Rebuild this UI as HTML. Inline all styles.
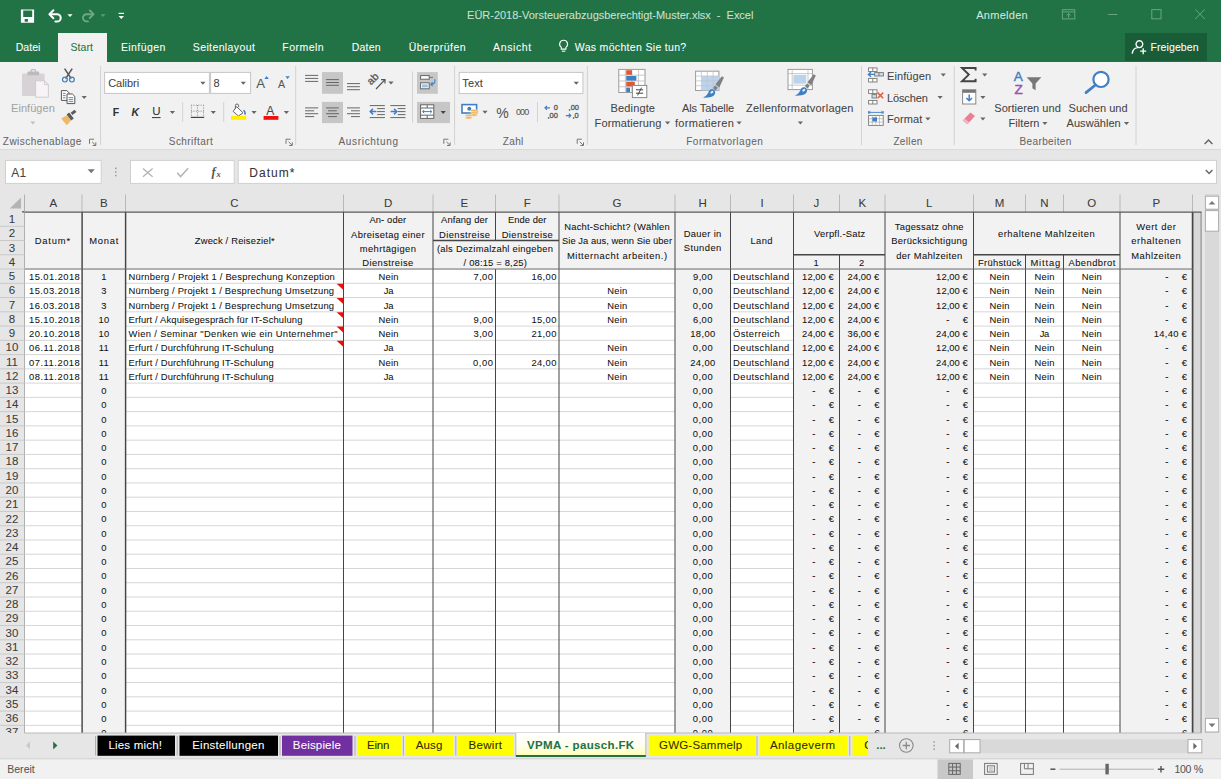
<!DOCTYPE html>
<html lang="de"><head><meta charset="utf-8"><title>EÜR-2018-Vorsteuerabzugsberechtigt-Muster.xlsx - Excel</title>
<style>
html,body{margin:0;padding:0;}
body{width:1221px;height:779px;overflow:hidden;background:#e6e6e6;font-family:"Liberation Sans", sans-serif;position:relative;}
#app{position:absolute;left:0;top:0;width:1221px;height:779px;overflow:hidden;}
#app div,#app svg{position:absolute;box-sizing:border-box;}
.t{white-space:pre;-webkit-text-stroke:0.06px currentColor;}
.c{-webkit-text-stroke:0.06px currentColor;}
</style></head>
<body><div id="app">
<div style="left:0px;top:0px;width:1221px;height:62px;background:#217346;"></div>
<div style="left:0px;top:61.5px;width:1221px;height:88px;background:#f1f1f1;"></div>
<div style="left:0px;top:149px;width:1221px;height:1px;background:#dadada;"></div>
<div style="left:58px;top:33px;width:48.5px;height:29px;background:#f1f1f1;"></div>
<div style="left:1124.5px;top:33px;width:82px;height:27.5px;background:#195c38;"></div>
<svg style="left:0px;top:0px;" width="1221" height="779" viewBox="0 0 1221 779"><path d="M20.9 9.5H34.1V22.7H20.9ZM23.2 10.6V16.9H32.2V10.6ZM24.7 18.9V21.8H27.9V18.9Z" fill="#fff" fill-rule="evenodd"/><path d="M50.2 14.2H57A3.7 3.7 0 0 1 57 21.6H55.4" fill="none" stroke="#fff" stroke-width="2.0" stroke-linecap="round"/><path d="M53.4 10.2L49.4 14.2L53.4 18.2" fill="none" stroke="#fff" stroke-width="2.0" stroke-linecap="round" stroke-linejoin="round"/><path d="M67.40 14.20h5.20l-2.60 2.90z" fill="#fff"/><path d="M93 14.2H86.6A3.6 3.6 0 0 0 86.6 21.4H88" fill="none" stroke="#6fa787" stroke-width="1.9" stroke-linecap="round"/><path d="M89.8 10.4L93.6 14.2L89.8 18" fill="none" stroke="#6fa787" stroke-width="1.9" stroke-linecap="round" stroke-linejoin="round"/><path d="M100.40 14.20h5.20l-2.60 2.90z" fill="#5c9a78"/><line x1="118.6" y1="13.4" x2="124" y2="13.4" stroke="#fff" stroke-width="1.2"/><path d="M118.6 16.1h5.4l-2.7 3z" fill="#fff" /><rect x="1062.4" y="9.7" width="12.4" height="9.2" fill="none" stroke="#69a583" stroke-width="1"/><line x1="1062.4" y1="11.9" x2="1074.8" y2="11.9" stroke="#69a583" stroke-width="1"/><path d="M1068.6 17.8V13.6M1066.6 15.5l2-1.9l2 1.9" fill="none" stroke="#69a583" stroke-width="1" /><line x1="1108.2" y1="14.5" x2="1117.4" y2="14.5" stroke="#69a583" stroke-width="1"/><rect x="1151.8" y="9.6" width="9.2" height="9.2" fill="none" stroke="#69a583" stroke-width="1"/><path d="M1195.2 9.4l9.6 9.6M1204.8 9.4l-9.6 9.6" fill="none" stroke="#69a583" stroke-width="1" /><path d="M563.6 40.3a3.9 3.9 0 0 1 2.3 7.1v1.7h-4.6v-1.7a3.9 3.9 0 0 1 2.3-7.1z" fill="none" stroke="#fff" stroke-width="1.1" /><line x1="561.9" y1="51.2" x2="565.3" y2="51.2" stroke="#fff" stroke-width="1.1"/><path d="M1139.4 40.8a3.4 3.4 0 1 1-.01 0zM1132.2 53.6c.6-4.4 3.4-6 6-6" fill="none" stroke="#fff" stroke-width="1.4" /><path d="M1143.2 48.2v6M1140.2 51.2h6" fill="none" stroke="#fff" stroke-width="1.3" /><line x1="100.6" y1="66" x2="100.6" y2="145" stroke="#d2d2d2" stroke-width="1"/><line x1="295.7" y1="66" x2="295.7" y2="145" stroke="#d2d2d2" stroke-width="1"/><line x1="454.6" y1="66" x2="454.6" y2="145" stroke="#d2d2d2" stroke-width="1"/><line x1="587.4" y1="66" x2="587.4" y2="145" stroke="#d2d2d2" stroke-width="1"/><line x1="861.5" y1="66" x2="861.5" y2="145" stroke="#d2d2d2" stroke-width="1"/><line x1="954.3" y1="66" x2="954.3" y2="145" stroke="#d2d2d2" stroke-width="1"/><line x1="1136" y1="66" x2="1136" y2="145" stroke="#d2d2d2" stroke-width="1"/><line x1="182.7" y1="102" x2="182.7" y2="122" stroke="#d2d2d2" stroke-width="1"/><line x1="223.7" y1="102" x2="223.7" y2="122" stroke="#d2d2d2" stroke-width="1"/><line x1="412.6" y1="71.5" x2="412.6" y2="122.8" stroke="#d2d2d2" stroke-width="1"/><line x1="537.5" y1="102" x2="537.5" y2="122.2" stroke="#d2d2d2" stroke-width="1"/><path d="M89.5 143.79999999999998V139.2H94.1" fill="none" stroke="#777" stroke-width="1" /><path d="M92.1 141.79999999999998L95.5 145.2M95.8 142.39999999999998V145.5H92.7" fill="none" stroke="#777" stroke-width="1" /><path d="M286 143.79999999999998V139.2H290.6" fill="none" stroke="#777" stroke-width="1" /><path d="M288.6 141.79999999999998L292 145.2M292.3 142.39999999999998V145.5H289.2" fill="none" stroke="#777" stroke-width="1" /><path d="M443.8 143.79999999999998V139.2H448.40000000000003" fill="none" stroke="#777" stroke-width="1" /><path d="M446.40000000000003 141.79999999999998L449.8 145.2M450.1 142.39999999999998V145.5H447.0" fill="none" stroke="#777" stroke-width="1" /><path d="M577.2 143.79999999999998V139.2H581.8000000000001" fill="none" stroke="#777" stroke-width="1" /><path d="M579.8000000000001 141.79999999999998L583.2 145.2M583.5 142.39999999999998V145.5H580.4000000000001" fill="none" stroke="#777" stroke-width="1" /><path d="M1204.6 144l3.9-4l3.9 4" fill="none" stroke="#666" stroke-width="1.5" /><rect x="22" y="73.6" width="22.6" height="22.3" fill="#d6d2d6" rx="1.2"/><rect x="27.5" y="71.4" width="11.6" height="3.8" fill="#bdb9bd" rx="0.8"/><rect x="31" y="69.6" width="4.6" height="3" fill="none" stroke="#bdb9bd" stroke-width="1.1" rx="1"/><path d="M35.6 80.8H44.6L48.4 84.6V97.2H35.6Z" fill="#f7f3f7" stroke="#cfcbcf" stroke-width="1" /><path d="M44.6 80.8V84.6H48.4" fill="none" stroke="#cfcbcf" stroke-width="1" /><path d="M30.20 121.60h5.20l-2.60 2.90z" fill="#c0c0c0"/><path d="M64.6 68.6L71.2 78.6M72.2 68.6L65.6 78.6" fill="none" stroke="#555" stroke-width="1.5" /><circle cx="64.9" cy="79.6" r="2.4" fill="none" stroke="#3f7fc4" stroke-width="1.2"/><circle cx="71.9" cy="79.6" r="2.4" fill="none" stroke="#3f7fc4" stroke-width="1.2"/><path d="M61.4 90.6h5.4l2.2 2.2v7.6h-7.6z" fill="#fff" stroke="#555" stroke-width="1" /><path d="M67 94h5.4l2.4 2.4v7.2H67z" fill="#fff" stroke="#555" stroke-width="1" /><line x1="62.9" y1="93.4" x2="65.6" y2="93.4" stroke="#3f7fc4" stroke-width="0.9"/><line x1="62.9" y1="95.6" x2="65.6" y2="95.6" stroke="#3f7fc4" stroke-width="0.9"/><line x1="62.9" y1="97.8" x2="65.6" y2="97.8" stroke="#3f7fc4" stroke-width="0.9"/><line x1="68.6" y1="97.6" x2="73.2" y2="97.6" stroke="#3f7fc4" stroke-width="0.9"/><line x1="68.6" y1="99.6" x2="73.2" y2="99.6" stroke="#3f7fc4" stroke-width="0.9"/><line x1="68.6" y1="101.6" x2="73.2" y2="101.6" stroke="#3f7fc4" stroke-width="0.9"/><path d="M81.60 96.00h5.20l-2.60 2.90z" fill="#666"/><path d="M61.2 118.6L66.8 115.2L71 120.6L66.8 125.2Z" fill="#eeb865" /><path d="M66.6 114.6l2.6-2l4.6 5.8l-2.6 2z" fill="#5a5a5a" /><path d="M70.6 112.8l4-3l1.8 2.3l-4 3z" fill="#5a5a5a" /><rect x="104.6" y="72.4" width="104.8" height="21" fill="#fff" stroke="#c6c6c6" stroke-width="1"/><rect x="210.6" y="72.4" width="40" height="21" fill="#fff" stroke="#c6c6c6" stroke-width="1"/><path d="M200.30 81.80h5.20l-2.60 2.90z" fill="#666"/><path d="M240.70 81.80h5.20l-2.60 2.90z" fill="#666"/><path d="M264.4 78.9l2.2-2.8l2.2 2.8z" fill="#3f7fc4" /><path d="M285.4 76.2h4.4l-2.2 2.8z" fill="#3f7fc4" /><line x1="152" y1="117.6" x2="160.6" y2="117.6" stroke="#333" stroke-width="1"/><path d="M169.80 111.10h5.20l-2.60 2.90z" fill="#666"/><line x1="191" y1="105.2" x2="204" y2="105.2" stroke="#9a9a9a" stroke-width="1" stroke-dasharray="1.2 1.2"/><line x1="191" y1="111.2" x2="204" y2="111.2" stroke="#9a9a9a" stroke-width="1" stroke-dasharray="1.2 1.2"/><line x1="191.4" y1="105" x2="191.4" y2="117" stroke="#9a9a9a" stroke-width="1" stroke-dasharray="1.2 1.2"/><line x1="197.5" y1="105" x2="197.5" y2="117" stroke="#9a9a9a" stroke-width="1" stroke-dasharray="1.2 1.2"/><line x1="203.6" y1="105" x2="203.6" y2="117" stroke="#9a9a9a" stroke-width="1" stroke-dasharray="1.2 1.2"/><line x1="190.8" y1="117.4" x2="204.2" y2="117.4" stroke="#444" stroke-width="1.2"/><path d="M210.70 111.10h5.20l-2.60 2.90z" fill="#666"/><path d="M236.6 106.6l6.4 6.2l-4.6 3.2l-5.2-4.6z" fill="#fff" stroke="#666" stroke-width="1" /><path d="M235.4 108.6v-3a1.6 1.6 0 0 1 3.2 0v1.4" fill="none" stroke="#666" stroke-width="1" /><path d="M243.6 110.2c1.4 1.4 2 2.8 1.2 4.4" fill="none" stroke="#3f7fc4" stroke-width="1.5" /><rect x="231" y="116" width="15.2" height="3.8" fill="#ffee00"/><path d="M251.40 111.10h5.20l-2.60 2.90z" fill="#666"/><rect x="263.6" y="116" width="14.8" height="3.8" fill="#ee1111"/><path d="M283.80 111.10h5.20l-2.60 2.90z" fill="#666"/><rect x="322" y="72.1" width="21" height="21.7" fill="#c6c6c6"/><rect x="322" y="101.9" width="21" height="21.2" fill="#c6c6c6"/><rect x="417" y="72.1" width="20.8" height="21.7" fill="#c6c6c6"/><rect x="417" y="101.9" width="33" height="21.2" fill="#c6c6c6"/><line x1="305.1" y1="75.4" x2="318.2" y2="75.4" stroke="#666" stroke-width="1"/><line x1="305.1" y1="78.4" x2="318.2" y2="78.4" stroke="#666" stroke-width="1"/><line x1="305.1" y1="81.4" x2="318.2" y2="81.4" stroke="#666" stroke-width="1"/><line x1="326.1" y1="79.6" x2="338.9" y2="79.6" stroke="#666" stroke-width="1"/><line x1="326.1" y1="82.5" x2="338.9" y2="82.5" stroke="#666" stroke-width="1"/><line x1="326.1" y1="85.3" x2="338.9" y2="85.3" stroke="#666" stroke-width="1"/><line x1="347" y1="83.6" x2="359.9" y2="83.6" stroke="#666" stroke-width="1"/><line x1="347" y1="86.7" x2="359.9" y2="86.7" stroke="#666" stroke-width="1"/><line x1="347" y1="89.7" x2="359.9" y2="89.7" stroke="#666" stroke-width="1"/><line x1="305.1" y1="107.9" x2="318.2" y2="107.9" stroke="#666" stroke-width="1"/><line x1="326.1" y1="107.9" x2="338.9" y2="107.9" stroke="#666" stroke-width="1"/><line x1="347" y1="107.9" x2="359.9" y2="107.9" stroke="#666" stroke-width="1"/><line x1="305.1" y1="110.8" x2="314.2" y2="110.8" stroke="#666" stroke-width="1"/><line x1="328.1" y1="110.8" x2="336.9" y2="110.8" stroke="#666" stroke-width="1"/><line x1="351" y1="110.8" x2="359.9" y2="110.8" stroke="#666" stroke-width="1"/><line x1="305.1" y1="113.7" x2="318.2" y2="113.7" stroke="#666" stroke-width="1"/><line x1="326.1" y1="113.7" x2="338.9" y2="113.7" stroke="#666" stroke-width="1"/><line x1="347" y1="113.7" x2="359.9" y2="113.7" stroke="#666" stroke-width="1"/><line x1="305.1" y1="116.6" x2="314.2" y2="116.6" stroke="#666" stroke-width="1"/><line x1="328.1" y1="116.6" x2="336.9" y2="116.6" stroke="#666" stroke-width="1"/><line x1="351" y1="116.6" x2="359.9" y2="116.6" stroke="#666" stroke-width="1"/><text x="0" y="0" transform="translate(371 85.4) rotate(-45)" font-family="Liberation Sans, sans-serif" font-size="10.5" fill="#555" stroke="#555" stroke-width="0.3">ab</text><path d="M376 89L384.8 79.8M381 79.6h4v4" fill="none" stroke="#555" stroke-width="1.2" /><path d="M388.40 81.60h5.20l-2.60 2.90z" fill="#666"/><line x1="369.7" y1="105.6" x2="384.9" y2="105.6" stroke="#666" stroke-width="1"/><line x1="369.7" y1="117.6" x2="384.9" y2="117.6" stroke="#666" stroke-width="1"/><line x1="377.09999999999997" y1="108.6" x2="384.9" y2="108.6" stroke="#666" stroke-width="1"/><line x1="377.09999999999997" y1="111.6" x2="384.9" y2="111.6" stroke="#666" stroke-width="1"/><line x1="377.09999999999997" y1="114.6" x2="384.9" y2="114.6" stroke="#666" stroke-width="1"/><line x1="390.3" y1="105.6" x2="405.5" y2="105.6" stroke="#666" stroke-width="1"/><line x1="390.3" y1="117.6" x2="405.5" y2="117.6" stroke="#666" stroke-width="1"/><line x1="397.7" y1="108.6" x2="405.5" y2="108.6" stroke="#666" stroke-width="1"/><line x1="397.7" y1="111.6" x2="405.5" y2="111.6" stroke="#666" stroke-width="1"/><line x1="397.7" y1="114.6" x2="405.5" y2="114.6" stroke="#666" stroke-width="1"/><path d="M376.4 111.6H370.4M373 108.8l-2.8 2.8l2.8 2.8" fill="none" stroke="#3f7fc4" stroke-width="1.5" /><path d="M390.6 111.6H396.6M394 108.8l2.8 2.8l-2.8 2.8" fill="none" stroke="#3f7fc4" stroke-width="1.5" /><rect x="420.6" y="75.6" width="8.6" height="3.6" fill="#fff" stroke="#666" stroke-width="1"/><line x1="429.2" y1="77.4" x2="433" y2="77.4" stroke="#3f7fc4" stroke-width="1"/><rect x="420.6" y="82.8" width="8.6" height="6" fill="#fff" stroke="#666" stroke-width="1"/><rect x="422" y="84.4" width="5.8" height="3" fill="#9dbfe6"/><path d="M434.6 79.2c1.2 3-0.4 5-3.4 5M432.6 82.4l-1.8 1.8l1.8 1.8" fill="none" stroke="#3f7fc4" stroke-width="1.1" /><rect x="420.6" y="104.8" width="13.2" height="13.6" fill="#fff" stroke="#666" stroke-width="1"/><line x1="420.6" y1="108" x2="433.8" y2="108" stroke="#666" stroke-width="1"/><line x1="420.6" y1="115.2" x2="433.8" y2="115.2" stroke="#666" stroke-width="1"/><line x1="427.2" y1="104.8" x2="427.2" y2="108" stroke="#666" stroke-width="1"/><line x1="427.2" y1="115.2" x2="427.2" y2="118.4" stroke="#666" stroke-width="1"/><path d="M422.6 111.6h9.2M424.2 110l-1.6 1.6l1.6 1.6M430.2 110l1.6 1.6l-1.6 1.6" fill="none" stroke="#3f7fc4" stroke-width="1" /><path d="M440.60 111.00h5.20l-2.60 2.90z" fill="#444"/><rect x="459.2" y="72.4" width="123.7" height="21.2" fill="#fff" stroke="#c6c6c6" stroke-width="1"/><path d="M573.70 81.80h5.20l-2.60 2.90z" fill="#666"/><rect x="462" y="104.6" width="14.6" height="8.4" fill="#fff" stroke="#3f7fc4" stroke-width="1.6"/><circle cx="469.3" cy="108.8" r="2" fill="#3f7fc4"/><ellipse cx="474" cy="110.6" rx="3.4" ry="1.3" fill="#edb760" stroke="#f1f1f1" stroke-width="0.5"/><ellipse cx="474" cy="112.8" rx="3.4" ry="1.3" fill="#edb760" stroke="#f1f1f1" stroke-width="0.5"/><ellipse cx="474" cy="115" rx="3.4" ry="1.3" fill="#edb760" stroke="#f1f1f1" stroke-width="0.5"/><ellipse cx="468.6" cy="115.6" rx="3.4" ry="1.3" fill="#edb760" stroke="#f1f1f1" stroke-width="0.5"/><ellipse cx="468.6" cy="117.8" rx="3.4" ry="1.3" fill="#edb760" stroke="#f1f1f1" stroke-width="0.5"/><path d="M482.40 110.80h5.20l-2.60 2.90z" fill="#666"/><text x="553.8" y="110.2" font-family="Liberation Sans, sans-serif" font-size="7.5" fill="#555" stroke="#555" stroke-width="0.3">0</text><text x="547.4" y="117.8" font-family="Liberation Sans, sans-serif" font-size="7.5" fill="#555" stroke="#555" stroke-width="0.3">,00</text><path d="M545 107.8h5M547 105.8l-2 2l2 2" fill="none" stroke="#3f7fc4" stroke-width="1.2" /><text x="568.6" y="110.2" font-family="Liberation Sans, sans-serif" font-size="7.5" fill="#555" stroke="#555" stroke-width="0.3">,00</text><text x="572.4" y="117.8" font-family="Liberation Sans, sans-serif" font-size="7.5" fill="#555" stroke="#555" stroke-width="0.3">,0</text><path d="M565.8 115.6h5M568.8 113.6l2 2l-2 2" fill="none" stroke="#3f7fc4" stroke-width="1.2" /><rect x="618.8" y="69.4" width="26.2" height="23.1" fill="#fff" stroke="#999" stroke-width="1"/><line x1="618.8" y1="75.18" x2="645" y2="75.18" stroke="#bbb" stroke-width="0.8"/><line x1="618.8" y1="80.96000000000001" x2="645" y2="80.96000000000001" stroke="#bbb" stroke-width="0.8"/><line x1="618.8" y1="86.74000000000001" x2="645" y2="86.74000000000001" stroke="#bbb" stroke-width="0.8"/><line x1="625.3499999999999" y1="69.4" x2="625.3499999999999" y2="92.5" stroke="#bbb" stroke-width="0.8"/><line x1="631.9" y1="69.4" x2="631.9" y2="92.5" stroke="#bbb" stroke-width="0.8"/><line x1="638.4499999999999" y1="69.4" x2="638.4499999999999" y2="92.5" stroke="#bbb" stroke-width="0.8"/><rect x="626.2" y="70.2" width="5.8" height="4.6" fill="#dd5a33"/><rect x="626.2" y="76" width="10.2" height="4.6" fill="#3f7fc4"/><rect x="626.2" y="81.8" width="8.6" height="4.6" fill="#dd5a33"/><rect x="626.2" y="87.6" width="3.8" height="4.4" fill="#3f7fc4"/><rect x="632.4" y="85.4" width="14.4" height="12.2" fill="#fff" stroke="#888" stroke-width="1"/><path d="M636 89.8h7.2M636 93.2h7.2M641.6 87.6l-4 7.8" fill="none" stroke="#444" stroke-width="1" /><path d="M665.00 121.50h5.20l-2.60 2.90z" fill="#666"/><rect x="695.6" y="71.2" width="23.3" height="19.3" fill="#fff" stroke="#999" stroke-width="1"/><rect x="701.6" y="76" width="17.3" height="14.5" fill="#bcd3ee"/><line x1="695.6" y1="76.03" x2="718.9" y2="76.03" stroke="#c4c4c4" stroke-width="0.8"/><line x1="695.6" y1="80.86" x2="718.9" y2="80.86" stroke="#c4c4c4" stroke-width="0.8"/><line x1="695.6" y1="85.69" x2="718.9" y2="85.69" stroke="#c4c4c4" stroke-width="0.8"/><line x1="701.4300000000001" y1="71.2" x2="701.4300000000001" y2="90.5" stroke="#c4c4c4" stroke-width="0.8"/><line x1="707.26" y1="71.2" x2="707.26" y2="90.5" stroke="#c4c4c4" stroke-width="0.8"/><line x1="713.09" y1="71.2" x2="713.09" y2="90.5" stroke="#c4c4c4" stroke-width="0.8"/><path d="M702.3 97.6C706.3 96.6 707.6999999999999 94.0 708.9 91.19999999999999C709.9 89.0 713.6999999999999 88.6 714.9 91.0C715.9 93.39999999999999 714.3 96.19999999999999 710.9 97.0C707.9 97.69999999999999 704.9 97.69999999999999 702.3 97.6Z" fill="#3f7fc4" /><path d="M712.9 88.0L715.3 85.39999999999999L717.9 87.8L715.5 90.39999999999999Z" fill="#808080" /><path d="M715.5 84.19999999999999L721.9 76.19999999999999L723.9 77.6L719.3 87.39999999999999Z" fill="#808080" /><ellipse cx="711.9" cy="92.19999999999999" rx="1.7" ry="1.1" fill="#e6eef8" transform="rotate(-35 711.9 92.19999999999999)"/><path d="M736.50 121.50h5.20l-2.60 2.90z" fill="#666"/><rect x="788" y="69.4" width="24.4" height="20.2" fill="#fff" stroke="#999" stroke-width="1"/><line x1="788" y1="73.6" x2="812.4" y2="73.6" stroke="#bbb" stroke-width="0.8"/><line x1="788" y1="85.2" x2="812.4" y2="85.2" stroke="#bbb" stroke-width="0.8"/><line x1="792.2" y1="69.4" x2="792.2" y2="89.6" stroke="#bbb" stroke-width="0.8"/><line x1="808" y1="69.4" x2="808" y2="89.6" stroke="#bbb" stroke-width="0.8"/><rect x="793.4" y="74.9" width="12.9" height="8.8" fill="#bcd3ee"/><path d="M794.2 95.6C798.2 94.6 799.6 92.0 800.8000000000001 89.19999999999999C801.8000000000001 87.0 805.6 86.6 806.8000000000001 89.0C807.8000000000001 91.39999999999999 806.2 94.19999999999999 802.8000000000001 95.0C799.8000000000001 95.69999999999999 796.8000000000001 95.69999999999999 794.2 95.6Z" fill="#3f7fc4" /><path d="M804.8000000000001 86.0L807.2 83.39999999999999L809.8000000000001 85.8L807.4000000000001 88.39999999999999Z" fill="#808080" /><path d="M807.4000000000001 82.19999999999999L813.8000000000001 74.19999999999999L815.8000000000001 75.6L811.2 85.39999999999999Z" fill="#808080" /><ellipse cx="803.8000000000001" cy="90.19999999999999" rx="1.7" ry="1.1" fill="#e6eef8" transform="rotate(-35 803.8000000000001 90.19999999999999)"/><path d="M797.80 121.50h5.20l-2.60 2.90z" fill="#666"/><rect x="868.6" y="67.9" width="8.4" height="3.6" fill="#fff" stroke="#777" stroke-width="0.9"/><line x1="872.8000000000001" y1="67.9" x2="872.8000000000001" y2="71.5" stroke="#777" stroke-width="0.9"/><rect x="868.6" y="78.4" width="8.4" height="3.6" fill="#fff" stroke="#777" stroke-width="0.9"/><line x1="872.8000000000001" y1="78.4" x2="872.8000000000001" y2="82.0" stroke="#777" stroke-width="0.9"/><rect x="874.6" y="72.6" width="8.8" height="3.4" fill="#c9dcf2" stroke="#777" stroke-width="0.9"/><line x1="879" y1="72.6" x2="879" y2="76" stroke="#777" stroke-width="0.9"/><path d="M874 74.4h-5.4M871 72l-2.6 2.4l2.6 2.4" fill="none" stroke="#3f7fc4" stroke-width="1.4" /><path d="M940.70 73.60h5.20l-2.60 2.90z" fill="#666"/><rect x="868.6" y="89.8" width="8.4" height="3.6" fill="#fff" stroke="#777" stroke-width="0.9"/><line x1="872.8000000000001" y1="89.8" x2="872.8000000000001" y2="93.39999999999999" stroke="#777" stroke-width="0.9"/><rect x="868.6" y="100.4" width="8.4" height="3.6" fill="#fff" stroke="#777" stroke-width="0.9"/><line x1="872.8000000000001" y1="100.4" x2="872.8000000000001" y2="104.0" stroke="#777" stroke-width="0.9"/><rect x="872" y="94.6" width="4.6" height="3.4" fill="#c9dcf2" stroke="#777" stroke-width="0.9"/><path d="M877.6 92.6l5.6 5.6M883.2 92.6l-5.6 5.6" fill="none" stroke="#e0613c" stroke-width="1.5" /><path d="M937.50 96.10h5.20l-2.60 2.90z" fill="#666"/><path d="M868.6 112.4h14.6M868.6 111v2.8M883.2 111v2.8M870.4 111.2l-1.6 1.2l1.6 1.2M881.4 111.2l1.6 1.2l-1.6 1.2" fill="none" stroke="#3f7fc4" stroke-width="0.9" /><rect x="868.6" y="115.4" width="14.6" height="10" fill="#fff" stroke="#777" stroke-width="0.9"/><line x1="868.6" y1="118.73" x2="883.2" y2="118.73" stroke="#aaa" stroke-width="0.7"/><line x1="868.6" y1="122.06" x2="883.2" y2="122.06" stroke="#aaa" stroke-width="0.7"/><line x1="872.25" y1="115.4" x2="872.25" y2="125.4" stroke="#aaa" stroke-width="0.7"/><line x1="875.9" y1="115.4" x2="875.9" y2="125.4" stroke="#aaa" stroke-width="0.7"/><line x1="879.5500000000001" y1="115.4" x2="879.5500000000001" y2="125.4" stroke="#aaa" stroke-width="0.7"/><rect x="872.4" y="117.4" width="4.6" height="4" fill="#3f7fc4"/><path d="M925.30 117.50h5.20l-2.60 2.90z" fill="#666"/><path d="M975.6 70.4V68H962L968.8 74.6L962 81.2H975.6V78.8" fill="none" stroke="#444" stroke-width="1.9" /><path d="M982.10 73.60h5.20l-2.60 2.90z" fill="#666"/><rect x="962.6" y="89.8" width="13.2" height="14.2" fill="#fff" stroke="#888" stroke-width="1"/><rect x="962.6" y="89.8" width="13.2" height="3" fill="#777"/><path d="M969.2 94.6v6M966.4 98l2.8 2.8l2.8-2.8" fill="none" stroke="#3f7fc4" stroke-width="1.5" /><path d="M980.30 96.10h5.20l-2.60 2.90z" fill="#666"/><path d="M962.8 120.6l7.6-8.2l4.6 3.6l-7.6 8.2z" fill="#e87f95" /><path d="M962.8 120.6l1.8-2l4.6 3.6l-1.8 2z" fill="#f4b6c2" /><path d="M980.30 117.50h5.20l-2.60 2.90z" fill="#666"/><text x="1013.8" y="81.3" font-family="Liberation Sans, sans-serif" font-size="13.6" fill="#3f7fc4" stroke="#3f7fc4" stroke-width="0.4">A</text><text x="1014.6" y="93.9" font-family="Liberation Sans, sans-serif" font-size="13.6" fill="#9b4fb4" stroke="#9b4fb4" stroke-width="0.4">Z</text><path d="M1026.6 77.2h14.8l-5.8 6.4v6.6l-3.2-2v-4.6z" fill="#777" /><path d="M1042.30 122.00h5.20l-2.60 2.90z" fill="#666"/><circle cx="1101" cy="79.4" r="7.6" fill="#fff" stroke="#3f7fc4" stroke-width="2.2"/><path d="M1095.4 85L1086 92.6" fill="none" stroke="#3f7fc4" stroke-width="2.8" stroke-linecap="round"/><path d="M1123.90 122.00h5.20l-2.60 2.90z" fill="#666"/><rect x="5.5" y="160.4" width="95.7" height="23" fill="#fff" stroke="#d0d0d0" stroke-width="1"/><rect x="130.5" y="160.4" width="103.7" height="23" fill="#fff" stroke="#d0d0d0" stroke-width="1"/><rect x="238.2" y="160.4" width="978.3" height="23" fill="#fff" stroke="#d0d0d0" stroke-width="1"/><path d="M87.56 169.24h7.28l-3.64 4.06z" fill="#777"/><rect x="115" y="167.6" width="1.5" height="1.5" fill="#9a9a9a"/><rect x="115" y="171.2" width="1.5" height="1.5" fill="#9a9a9a"/><rect x="115" y="174.8" width="1.5" height="1.5" fill="#9a9a9a"/><path d="M143 168.4l9.6 8.4M152.6 168.4l-9.6 8.4" fill="none" stroke="#b4b4b4" stroke-width="1.3" /><path d="M177.2 172.8l3.4 3.8l7.6-8.4" fill="none" stroke="#b4b4b4" stroke-width="1.5" /><text x="211.6" y="176.4" font-family="Liberation Serif, serif" font-style="italic" font-weight="bold" font-size="12.5" fill="#555">f</text><text x="216.4" y="177" font-family="Liberation Serif, serif" font-style="italic" font-weight="bold" font-size="8.5" fill="#555">x</text><path d="M1205.8 170l3.3 3.4l3.3-3.4" fill="none" stroke="#666" stroke-width="1.5" /></svg>
<div class="t" style="left:467.10px;top:8px;font-size:11px;line-height:15px;color:#cde0d4;letter-spacing:-0.019px;">EÜR-2018-Vorsteuerabzugsberechtigt-Muster.xlsx  -  Excel</div>
<div class="t" style="left:976.20px;top:8px;font-size:11px;line-height:15px;color:#d5e6db;letter-spacing:0.281px;">Anmelden</div>
<div class="t" style="left:15.70px;top:40px;font-size:10.5px;line-height:15px;color:#fff;letter-spacing:0.047px;">Datei</div>
<div class="t" style="left:120.90px;top:40px;font-size:10.5px;line-height:15px;color:#fff;letter-spacing:0.436px;">Einfügen</div>
<div class="t" style="left:192.80px;top:40px;font-size:10.5px;line-height:15px;color:#fff;letter-spacing:0.383px;">Seitenlayout</div>
<div class="t" style="left:282.30px;top:40px;font-size:10.5px;line-height:15px;color:#fff;letter-spacing:0.482px;">Formeln</div>
<div class="t" style="left:351.70px;top:40px;font-size:10.5px;line-height:15px;color:#fff;letter-spacing:0.245px;">Daten</div>
<div class="t" style="left:408.70px;top:40px;font-size:10.5px;line-height:15px;color:#fff;letter-spacing:0.485px;">Überprüfen</div>
<div class="t" style="left:493.10px;top:40px;font-size:10.5px;line-height:15px;color:#fff;letter-spacing:0.595px;">Ansicht</div>
<div class="t" style="left:574.80px;top:40px;font-size:10.5px;line-height:15px;color:#fff;letter-spacing:0.324px;">Was möchten Sie tun?</div>
<div class="t" style="left:70.40px;top:40px;font-size:10.5px;line-height:15px;color:#217346;letter-spacing:0.081px;">Start</div>
<div class="t" style="left:1150.50px;top:40px;font-size:10.5px;line-height:15px;color:#fff;letter-spacing:0.102px;">Freigeben</div>
<div class="t" style="left:11.00px;top:101px;font-size:11px;line-height:15px;color:#a3a3a3;letter-spacing:0.054px;">Einfügen</div>
<div class="t" style="left:2.80px;top:135px;font-size:10px;line-height:14px;color:#666;letter-spacing:0.487px;">Zwischenablage</div>
<div class="t" style="left:108.20px;top:76px;font-size:11px;line-height:15px;color:#444;letter-spacing:-0.029px;">Calibri</div>
<div class="t" style="left:213.40px;top:76px;font-size:11px;line-height:15px;color:#444;">8</div>
<div class="t" style="left:256.20px;top:75px;font-size:13.2px;line-height:18px;color:#555;">A</div>
<div class="t" style="left:278.00px;top:77px;font-size:10.6px;line-height:15px;color:#555;">A</div>
<div class="t" style="left:112.80px;top:105px;font-size:10.5px;line-height:15px;color:#333;font-weight:bold;">F</div>
<div class="t" style="left:131.40px;top:105px;font-size:10.5px;line-height:15px;color:#333;font-weight:bold;font-style:italic;">K</div>
<div class="t" style="left:152.20px;top:103px;font-size:11.5px;line-height:16px;color:#333;">U</div>
<div class="t" style="left:266.30px;top:103px;font-size:12px;line-height:17px;color:#444;">A</div>
<div class="t" style="left:168.80px;top:135px;font-size:10px;line-height:14px;color:#666;letter-spacing:0.432px;">Schriftart</div>
<div class="t" style="left:338.50px;top:135px;font-size:10px;line-height:14px;color:#666;letter-spacing:0.669px;">Ausrichtung</div>
<div class="t" style="left:462.30px;top:76px;font-size:11px;line-height:15px;color:#444;letter-spacing:0.142px;">Text</div>
<div class="t" style="left:496.20px;top:103px;font-size:14px;line-height:20px;color:#555;">%</div>
<div class="t" style="left:516.00px;top:106px;font-size:9px;line-height:13px;color:#555;letter-spacing:-0.908px;">000</div>
<div class="t" style="left:502.80px;top:135px;font-size:10px;line-height:14px;color:#666;letter-spacing:0.349px;">Zahl</div>
<div class="t" style="left:610.60px;top:101px;font-size:11px;line-height:15px;color:#444;letter-spacing:0.139px;">Bedingte</div>
<div class="t" style="left:594.60px;top:116px;font-size:11px;line-height:15px;color:#444;letter-spacing:0.126px;">Formatierung</div>
<div class="t" style="left:681.90px;top:101px;font-size:11px;line-height:15px;color:#444;letter-spacing:-0.070px;">Als Tabelle</div>
<div class="t" style="left:674.90px;top:116px;font-size:11px;line-height:15px;color:#444;letter-spacing:0.337px;">formatieren</div>
<div class="t" style="left:746.10px;top:101px;font-size:11px;line-height:15px;color:#444;letter-spacing:0.214px;">Zellenformatvorlagen</div>
<div class="t" style="left:686.20px;top:135px;font-size:10px;line-height:14px;color:#666;letter-spacing:0.513px;">Formatvorlagen</div>
<div class="t" style="left:887.00px;top:69px;font-size:11px;line-height:15px;color:#444;letter-spacing:0.082px;">Einfügen</div>
<div class="t" style="left:887.00px;top:91px;font-size:11px;line-height:15px;color:#444;letter-spacing:-0.131px;">Löschen</div>
<div class="t" style="left:887.00px;top:112px;font-size:11px;line-height:15px;color:#444;letter-spacing:0.113px;">Format</div>
<div class="t" style="left:893.40px;top:135px;font-size:10px;line-height:14px;color:#666;letter-spacing:0.353px;">Zellen</div>
<div class="t" style="left:994.30px;top:101px;font-size:11px;line-height:15px;color:#444;letter-spacing:0.038px;">Sortieren und</div>
<div class="t" style="left:1008.60px;top:116px;font-size:11px;line-height:15px;color:#444;letter-spacing:0.056px;">Filtern</div>
<div class="t" style="left:1068.50px;top:101px;font-size:11px;line-height:15px;color:#444;letter-spacing:0.043px;">Suchen und</div>
<div class="t" style="left:1066.60px;top:116px;font-size:11px;line-height:15px;color:#444;letter-spacing:0.036px;">Auswählen</div>
<div class="t" style="left:1019.40px;top:135px;font-size:10px;line-height:14px;color:#666;letter-spacing:0.403px;">Bearbeiten</div>
<div class="t" style="left:11.20px;top:165px;font-size:12px;line-height:17px;color:#444;letter-spacing:0.322px;">A1</div>
<div class="t" style="left:249.30px;top:165px;font-size:12px;line-height:17px;color:#333;letter-spacing:0.997px;">Datum*</div>
<svg style="left:0px;top:0px;" width="1221" height="779" viewBox="0 0 1221 779"><rect x="24.5" y="212.0" width="1176.5" height="521.0" fill="#fff"/><rect x="82" y="212.0" width="43.5" height="521.0" fill="#f2f2f2"/><rect x="675" y="212.0" width="55.5" height="521.0" fill="#f2f2f2"/><rect x="793.5" y="212.0" width="46.0" height="521.0" fill="#f2f2f2"/><rect x="839.5" y="212.0" width="45.5" height="521.0" fill="#f2f2f2"/><rect x="885" y="212.0" width="88.5" height="521.0" fill="#f2f2f2"/><rect x="1120" y="212.0" width="72.5" height="521.0" fill="#f2f2f2"/><rect x="24.5" y="212.0" width="1168.0" height="57.04" fill="#f2f2f2"/><rect x="1192.5" y="212.0" width="8.5" height="521.0" fill="#d9d9d9"/><line x1="24.5" y1="283.30" x2="82" y2="283.30" stroke="#d6d6d6" stroke-width="1"/><line x1="125.5" y1="283.30" x2="675" y2="283.30" stroke="#d6d6d6" stroke-width="1"/><line x1="730.5" y1="283.30" x2="793.5" y2="283.30" stroke="#d6d6d6" stroke-width="1"/><line x1="973.5" y1="283.30" x2="1120" y2="283.30" stroke="#d6d6d6" stroke-width="1"/><line x1="24.5" y1="297.56" x2="82" y2="297.56" stroke="#d6d6d6" stroke-width="1"/><line x1="125.5" y1="297.56" x2="675" y2="297.56" stroke="#d6d6d6" stroke-width="1"/><line x1="730.5" y1="297.56" x2="793.5" y2="297.56" stroke="#d6d6d6" stroke-width="1"/><line x1="973.5" y1="297.56" x2="1120" y2="297.56" stroke="#d6d6d6" stroke-width="1"/><line x1="24.5" y1="311.82" x2="82" y2="311.82" stroke="#d6d6d6" stroke-width="1"/><line x1="125.5" y1="311.82" x2="675" y2="311.82" stroke="#d6d6d6" stroke-width="1"/><line x1="730.5" y1="311.82" x2="793.5" y2="311.82" stroke="#d6d6d6" stroke-width="1"/><line x1="973.5" y1="311.82" x2="1120" y2="311.82" stroke="#d6d6d6" stroke-width="1"/><line x1="24.5" y1="326.08" x2="82" y2="326.08" stroke="#d6d6d6" stroke-width="1"/><line x1="125.5" y1="326.08" x2="675" y2="326.08" stroke="#d6d6d6" stroke-width="1"/><line x1="730.5" y1="326.08" x2="793.5" y2="326.08" stroke="#d6d6d6" stroke-width="1"/><line x1="973.5" y1="326.08" x2="1120" y2="326.08" stroke="#d6d6d6" stroke-width="1"/><line x1="24.5" y1="340.34" x2="82" y2="340.34" stroke="#d6d6d6" stroke-width="1"/><line x1="125.5" y1="340.34" x2="675" y2="340.34" stroke="#d6d6d6" stroke-width="1"/><line x1="730.5" y1="340.34" x2="793.5" y2="340.34" stroke="#d6d6d6" stroke-width="1"/><line x1="973.5" y1="340.34" x2="1120" y2="340.34" stroke="#d6d6d6" stroke-width="1"/><line x1="24.5" y1="354.60" x2="82" y2="354.60" stroke="#d6d6d6" stroke-width="1"/><line x1="125.5" y1="354.60" x2="675" y2="354.60" stroke="#d6d6d6" stroke-width="1"/><line x1="730.5" y1="354.60" x2="793.5" y2="354.60" stroke="#d6d6d6" stroke-width="1"/><line x1="973.5" y1="354.60" x2="1120" y2="354.60" stroke="#d6d6d6" stroke-width="1"/><line x1="24.5" y1="368.86" x2="82" y2="368.86" stroke="#d6d6d6" stroke-width="1"/><line x1="125.5" y1="368.86" x2="675" y2="368.86" stroke="#d6d6d6" stroke-width="1"/><line x1="730.5" y1="368.86" x2="793.5" y2="368.86" stroke="#d6d6d6" stroke-width="1"/><line x1="973.5" y1="368.86" x2="1120" y2="368.86" stroke="#d6d6d6" stroke-width="1"/><line x1="24.5" y1="383.12" x2="82" y2="383.12" stroke="#d6d6d6" stroke-width="1"/><line x1="125.5" y1="383.12" x2="675" y2="383.12" stroke="#d6d6d6" stroke-width="1"/><line x1="730.5" y1="383.12" x2="793.5" y2="383.12" stroke="#d6d6d6" stroke-width="1"/><line x1="973.5" y1="383.12" x2="1120" y2="383.12" stroke="#d6d6d6" stroke-width="1"/><line x1="24.5" y1="397.38" x2="82" y2="397.38" stroke="#d6d6d6" stroke-width="1"/><line x1="125.5" y1="397.38" x2="675" y2="397.38" stroke="#d6d6d6" stroke-width="1"/><line x1="730.5" y1="397.38" x2="793.5" y2="397.38" stroke="#d6d6d6" stroke-width="1"/><line x1="973.5" y1="397.38" x2="1120" y2="397.38" stroke="#d6d6d6" stroke-width="1"/><line x1="24.5" y1="411.64" x2="82" y2="411.64" stroke="#d6d6d6" stroke-width="1"/><line x1="125.5" y1="411.64" x2="675" y2="411.64" stroke="#d6d6d6" stroke-width="1"/><line x1="730.5" y1="411.64" x2="793.5" y2="411.64" stroke="#d6d6d6" stroke-width="1"/><line x1="973.5" y1="411.64" x2="1120" y2="411.64" stroke="#d6d6d6" stroke-width="1"/><line x1="24.5" y1="425.90" x2="82" y2="425.90" stroke="#d6d6d6" stroke-width="1"/><line x1="125.5" y1="425.90" x2="675" y2="425.90" stroke="#d6d6d6" stroke-width="1"/><line x1="730.5" y1="425.90" x2="793.5" y2="425.90" stroke="#d6d6d6" stroke-width="1"/><line x1="973.5" y1="425.90" x2="1120" y2="425.90" stroke="#d6d6d6" stroke-width="1"/><line x1="24.5" y1="440.16" x2="82" y2="440.16" stroke="#d6d6d6" stroke-width="1"/><line x1="125.5" y1="440.16" x2="675" y2="440.16" stroke="#d6d6d6" stroke-width="1"/><line x1="730.5" y1="440.16" x2="793.5" y2="440.16" stroke="#d6d6d6" stroke-width="1"/><line x1="973.5" y1="440.16" x2="1120" y2="440.16" stroke="#d6d6d6" stroke-width="1"/><line x1="24.5" y1="454.42" x2="82" y2="454.42" stroke="#d6d6d6" stroke-width="1"/><line x1="125.5" y1="454.42" x2="675" y2="454.42" stroke="#d6d6d6" stroke-width="1"/><line x1="730.5" y1="454.42" x2="793.5" y2="454.42" stroke="#d6d6d6" stroke-width="1"/><line x1="973.5" y1="454.42" x2="1120" y2="454.42" stroke="#d6d6d6" stroke-width="1"/><line x1="24.5" y1="468.68" x2="82" y2="468.68" stroke="#d6d6d6" stroke-width="1"/><line x1="125.5" y1="468.68" x2="675" y2="468.68" stroke="#d6d6d6" stroke-width="1"/><line x1="730.5" y1="468.68" x2="793.5" y2="468.68" stroke="#d6d6d6" stroke-width="1"/><line x1="973.5" y1="468.68" x2="1120" y2="468.68" stroke="#d6d6d6" stroke-width="1"/><line x1="24.5" y1="482.94" x2="82" y2="482.94" stroke="#d6d6d6" stroke-width="1"/><line x1="125.5" y1="482.94" x2="675" y2="482.94" stroke="#d6d6d6" stroke-width="1"/><line x1="730.5" y1="482.94" x2="793.5" y2="482.94" stroke="#d6d6d6" stroke-width="1"/><line x1="973.5" y1="482.94" x2="1120" y2="482.94" stroke="#d6d6d6" stroke-width="1"/><line x1="24.5" y1="497.20" x2="82" y2="497.20" stroke="#d6d6d6" stroke-width="1"/><line x1="125.5" y1="497.20" x2="675" y2="497.20" stroke="#d6d6d6" stroke-width="1"/><line x1="730.5" y1="497.20" x2="793.5" y2="497.20" stroke="#d6d6d6" stroke-width="1"/><line x1="973.5" y1="497.20" x2="1120" y2="497.20" stroke="#d6d6d6" stroke-width="1"/><line x1="24.5" y1="511.46" x2="82" y2="511.46" stroke="#d6d6d6" stroke-width="1"/><line x1="125.5" y1="511.46" x2="675" y2="511.46" stroke="#d6d6d6" stroke-width="1"/><line x1="730.5" y1="511.46" x2="793.5" y2="511.46" stroke="#d6d6d6" stroke-width="1"/><line x1="973.5" y1="511.46" x2="1120" y2="511.46" stroke="#d6d6d6" stroke-width="1"/><line x1="24.5" y1="525.72" x2="82" y2="525.72" stroke="#d6d6d6" stroke-width="1"/><line x1="125.5" y1="525.72" x2="675" y2="525.72" stroke="#d6d6d6" stroke-width="1"/><line x1="730.5" y1="525.72" x2="793.5" y2="525.72" stroke="#d6d6d6" stroke-width="1"/><line x1="973.5" y1="525.72" x2="1120" y2="525.72" stroke="#d6d6d6" stroke-width="1"/><line x1="24.5" y1="539.98" x2="82" y2="539.98" stroke="#d6d6d6" stroke-width="1"/><line x1="125.5" y1="539.98" x2="675" y2="539.98" stroke="#d6d6d6" stroke-width="1"/><line x1="730.5" y1="539.98" x2="793.5" y2="539.98" stroke="#d6d6d6" stroke-width="1"/><line x1="973.5" y1="539.98" x2="1120" y2="539.98" stroke="#d6d6d6" stroke-width="1"/><line x1="24.5" y1="554.24" x2="82" y2="554.24" stroke="#d6d6d6" stroke-width="1"/><line x1="125.5" y1="554.24" x2="675" y2="554.24" stroke="#d6d6d6" stroke-width="1"/><line x1="730.5" y1="554.24" x2="793.5" y2="554.24" stroke="#d6d6d6" stroke-width="1"/><line x1="973.5" y1="554.24" x2="1120" y2="554.24" stroke="#d6d6d6" stroke-width="1"/><line x1="24.5" y1="568.50" x2="82" y2="568.50" stroke="#d6d6d6" stroke-width="1"/><line x1="125.5" y1="568.50" x2="675" y2="568.50" stroke="#d6d6d6" stroke-width="1"/><line x1="730.5" y1="568.50" x2="793.5" y2="568.50" stroke="#d6d6d6" stroke-width="1"/><line x1="973.5" y1="568.50" x2="1120" y2="568.50" stroke="#d6d6d6" stroke-width="1"/><line x1="24.5" y1="582.76" x2="82" y2="582.76" stroke="#d6d6d6" stroke-width="1"/><line x1="125.5" y1="582.76" x2="675" y2="582.76" stroke="#d6d6d6" stroke-width="1"/><line x1="730.5" y1="582.76" x2="793.5" y2="582.76" stroke="#d6d6d6" stroke-width="1"/><line x1="973.5" y1="582.76" x2="1120" y2="582.76" stroke="#d6d6d6" stroke-width="1"/><line x1="24.5" y1="597.02" x2="82" y2="597.02" stroke="#d6d6d6" stroke-width="1"/><line x1="125.5" y1="597.02" x2="675" y2="597.02" stroke="#d6d6d6" stroke-width="1"/><line x1="730.5" y1="597.02" x2="793.5" y2="597.02" stroke="#d6d6d6" stroke-width="1"/><line x1="973.5" y1="597.02" x2="1120" y2="597.02" stroke="#d6d6d6" stroke-width="1"/><line x1="24.5" y1="611.28" x2="82" y2="611.28" stroke="#d6d6d6" stroke-width="1"/><line x1="125.5" y1="611.28" x2="675" y2="611.28" stroke="#d6d6d6" stroke-width="1"/><line x1="730.5" y1="611.28" x2="793.5" y2="611.28" stroke="#d6d6d6" stroke-width="1"/><line x1="973.5" y1="611.28" x2="1120" y2="611.28" stroke="#d6d6d6" stroke-width="1"/><line x1="24.5" y1="625.54" x2="82" y2="625.54" stroke="#d6d6d6" stroke-width="1"/><line x1="125.5" y1="625.54" x2="675" y2="625.54" stroke="#d6d6d6" stroke-width="1"/><line x1="730.5" y1="625.54" x2="793.5" y2="625.54" stroke="#d6d6d6" stroke-width="1"/><line x1="973.5" y1="625.54" x2="1120" y2="625.54" stroke="#d6d6d6" stroke-width="1"/><line x1="24.5" y1="639.80" x2="82" y2="639.80" stroke="#d6d6d6" stroke-width="1"/><line x1="125.5" y1="639.80" x2="675" y2="639.80" stroke="#d6d6d6" stroke-width="1"/><line x1="730.5" y1="639.80" x2="793.5" y2="639.80" stroke="#d6d6d6" stroke-width="1"/><line x1="973.5" y1="639.80" x2="1120" y2="639.80" stroke="#d6d6d6" stroke-width="1"/><line x1="24.5" y1="654.06" x2="82" y2="654.06" stroke="#d6d6d6" stroke-width="1"/><line x1="125.5" y1="654.06" x2="675" y2="654.06" stroke="#d6d6d6" stroke-width="1"/><line x1="730.5" y1="654.06" x2="793.5" y2="654.06" stroke="#d6d6d6" stroke-width="1"/><line x1="973.5" y1="654.06" x2="1120" y2="654.06" stroke="#d6d6d6" stroke-width="1"/><line x1="24.5" y1="668.32" x2="82" y2="668.32" stroke="#d6d6d6" stroke-width="1"/><line x1="125.5" y1="668.32" x2="675" y2="668.32" stroke="#d6d6d6" stroke-width="1"/><line x1="730.5" y1="668.32" x2="793.5" y2="668.32" stroke="#d6d6d6" stroke-width="1"/><line x1="973.5" y1="668.32" x2="1120" y2="668.32" stroke="#d6d6d6" stroke-width="1"/><line x1="24.5" y1="682.58" x2="82" y2="682.58" stroke="#d6d6d6" stroke-width="1"/><line x1="125.5" y1="682.58" x2="675" y2="682.58" stroke="#d6d6d6" stroke-width="1"/><line x1="730.5" y1="682.58" x2="793.5" y2="682.58" stroke="#d6d6d6" stroke-width="1"/><line x1="973.5" y1="682.58" x2="1120" y2="682.58" stroke="#d6d6d6" stroke-width="1"/><line x1="24.5" y1="696.84" x2="82" y2="696.84" stroke="#d6d6d6" stroke-width="1"/><line x1="125.5" y1="696.84" x2="675" y2="696.84" stroke="#d6d6d6" stroke-width="1"/><line x1="730.5" y1="696.84" x2="793.5" y2="696.84" stroke="#d6d6d6" stroke-width="1"/><line x1="973.5" y1="696.84" x2="1120" y2="696.84" stroke="#d6d6d6" stroke-width="1"/><line x1="24.5" y1="711.10" x2="82" y2="711.10" stroke="#d6d6d6" stroke-width="1"/><line x1="125.5" y1="711.10" x2="675" y2="711.10" stroke="#d6d6d6" stroke-width="1"/><line x1="730.5" y1="711.10" x2="793.5" y2="711.10" stroke="#d6d6d6" stroke-width="1"/><line x1="973.5" y1="711.10" x2="1120" y2="711.10" stroke="#d6d6d6" stroke-width="1"/><line x1="24.5" y1="725.36" x2="82" y2="725.36" stroke="#d6d6d6" stroke-width="1"/><line x1="125.5" y1="725.36" x2="675" y2="725.36" stroke="#d6d6d6" stroke-width="1"/><line x1="730.5" y1="725.36" x2="793.5" y2="725.36" stroke="#d6d6d6" stroke-width="1"/><line x1="973.5" y1="725.36" x2="1120" y2="725.36" stroke="#d6d6d6" stroke-width="1"/><line x1="82.1" y1="212.00" x2="82.1" y2="733.00" stroke="#454545" stroke-width="1.45"/><line x1="125.6" y1="212.00" x2="125.6" y2="733.00" stroke="#454545" stroke-width="1.45"/><line x1="343.5" y1="212.00" x2="343.5" y2="733.00" stroke="#454545" stroke-width="1"/><line x1="433" y1="212.00" x2="433" y2="733.00" stroke="#454545" stroke-width="1"/><line x1="559" y1="212.00" x2="559" y2="733.00" stroke="#454545" stroke-width="1"/><line x1="675" y1="212.00" x2="675" y2="733.00" stroke="#454545" stroke-width="1"/><line x1="730.5" y1="212.00" x2="730.5" y2="733.00" stroke="#454545" stroke-width="1"/><line x1="793.5" y1="212.00" x2="793.5" y2="733.00" stroke="#454545" stroke-width="1"/><line x1="885" y1="212.00" x2="885" y2="733.00" stroke="#454545" stroke-width="1"/><line x1="973.5" y1="212.00" x2="973.5" y2="733.00" stroke="#454545" stroke-width="1"/><line x1="1120" y1="212.00" x2="1120" y2="733.00" stroke="#454545" stroke-width="1"/><line x1="1192.6" y1="212.00" x2="1192.6" y2="733.00" stroke="#454545" stroke-width="1.7"/><line x1="1201.2" y1="212.00" x2="1201.2" y2="733.00" stroke="#454545" stroke-width="0.8"/><line x1="495.5" y1="212.00" x2="495.5" y2="240.52" stroke="#454545" stroke-width="1"/><line x1="495.5" y1="269.04" x2="495.5" y2="733.00" stroke="#454545" stroke-width="1"/><line x1="839.5" y1="254.78" x2="839.5" y2="733.00" stroke="#454545" stroke-width="1"/><line x1="1025.5" y1="254.78" x2="1025.5" y2="733.00" stroke="#454545" stroke-width="1"/><line x1="1063.5" y1="254.78" x2="1063.5" y2="733.00" stroke="#454545" stroke-width="1"/><line x1="24.5" y1="212.00" x2="1201.5" y2="212.00" stroke="#5a5a5a" stroke-width="1.2"/><line x1="24.5" y1="269.04" x2="1193" y2="269.04" stroke="#6a6a6a" stroke-width="1"/><line x1="433" y1="240.52" x2="559" y2="240.52" stroke="#454545" stroke-width="1.4"/><line x1="793.5" y1="254.78" x2="885" y2="254.78" stroke="#454545" stroke-width="1.4"/><line x1="973.5" y1="254.78" x2="1120" y2="254.78" stroke="#454545" stroke-width="1.4"/><path d="M336.6 283.80H343.2V289.80Z" fill="#e8100c"/><path d="M336.6 298.06H343.2V304.06Z" fill="#e8100c"/><path d="M336.6 312.32H343.2V318.32Z" fill="#e8100c"/><path d="M336.6 326.58H343.2V332.58Z" fill="#e8100c"/><path d="M336.6 340.84H343.2V346.84Z" fill="#e8100c"/></svg>
<svg style="left:0px;top:0px;" width="1221" height="779" viewBox="0 0 1221 779"><rect x="0" y="194.0" width="1201" height="18.0" fill="#e6e6e6"/><rect x="0" y="212.0" width="24.5" height="521.0" fill="#e6e6e6"/><path d="M21 197.5V208.5H9.8Z" fill="#b4b4b4"/><line x1="82" y1="194.5" x2="82" y2="212.0" stroke="#b8b8b8" stroke-width="1"/><line x1="125.5" y1="194.5" x2="125.5" y2="212.0" stroke="#b8b8b8" stroke-width="1"/><line x1="343.5" y1="194.5" x2="343.5" y2="212.0" stroke="#b8b8b8" stroke-width="1"/><line x1="433" y1="194.5" x2="433" y2="212.0" stroke="#b8b8b8" stroke-width="1"/><line x1="495.5" y1="194.5" x2="495.5" y2="212.0" stroke="#b8b8b8" stroke-width="1"/><line x1="559" y1="194.5" x2="559" y2="212.0" stroke="#b8b8b8" stroke-width="1"/><line x1="675" y1="194.5" x2="675" y2="212.0" stroke="#b8b8b8" stroke-width="1"/><line x1="730.5" y1="194.5" x2="730.5" y2="212.0" stroke="#b8b8b8" stroke-width="1"/><line x1="793.5" y1="194.5" x2="793.5" y2="212.0" stroke="#b8b8b8" stroke-width="1"/><line x1="839.5" y1="194.5" x2="839.5" y2="212.0" stroke="#b8b8b8" stroke-width="1"/><line x1="885" y1="194.5" x2="885" y2="212.0" stroke="#b8b8b8" stroke-width="1"/><line x1="973.5" y1="194.5" x2="973.5" y2="212.0" stroke="#b8b8b8" stroke-width="1"/><line x1="1025.5" y1="194.5" x2="1025.5" y2="212.0" stroke="#b8b8b8" stroke-width="1"/><line x1="1063.5" y1="194.5" x2="1063.5" y2="212.0" stroke="#b8b8b8" stroke-width="1"/><line x1="1120" y1="194.5" x2="1120" y2="212.0" stroke="#b8b8b8" stroke-width="1"/><line x1="1192.5" y1="194.5" x2="1192.5" y2="212.0" stroke="#b8b8b8" stroke-width="1"/><line x1="24.5" y1="194.5" x2="24.5" y2="733.0" stroke="#b0b0b0" stroke-width="1"/><line x1="0" y1="226.26" x2="24.5" y2="226.26" stroke="#c9c9c9" stroke-width="1"/><line x1="0" y1="240.52" x2="24.5" y2="240.52" stroke="#c9c9c9" stroke-width="1"/><line x1="0" y1="254.78" x2="24.5" y2="254.78" stroke="#c9c9c9" stroke-width="1"/><line x1="0" y1="269.04" x2="24.5" y2="269.04" stroke="#c9c9c9" stroke-width="1"/><line x1="0" y1="283.30" x2="24.5" y2="283.30" stroke="#c9c9c9" stroke-width="1"/><line x1="0" y1="297.56" x2="24.5" y2="297.56" stroke="#c9c9c9" stroke-width="1"/><line x1="0" y1="311.82" x2="24.5" y2="311.82" stroke="#c9c9c9" stroke-width="1"/><line x1="0" y1="326.08" x2="24.5" y2="326.08" stroke="#c9c9c9" stroke-width="1"/><line x1="0" y1="340.34" x2="24.5" y2="340.34" stroke="#c9c9c9" stroke-width="1"/><line x1="0" y1="354.60" x2="24.5" y2="354.60" stroke="#c9c9c9" stroke-width="1"/><line x1="0" y1="368.86" x2="24.5" y2="368.86" stroke="#c9c9c9" stroke-width="1"/><line x1="0" y1="383.12" x2="24.5" y2="383.12" stroke="#c9c9c9" stroke-width="1"/><line x1="0" y1="397.38" x2="24.5" y2="397.38" stroke="#c9c9c9" stroke-width="1"/><line x1="0" y1="411.64" x2="24.5" y2="411.64" stroke="#c9c9c9" stroke-width="1"/><line x1="0" y1="425.90" x2="24.5" y2="425.90" stroke="#c9c9c9" stroke-width="1"/><line x1="0" y1="440.16" x2="24.5" y2="440.16" stroke="#c9c9c9" stroke-width="1"/><line x1="0" y1="454.42" x2="24.5" y2="454.42" stroke="#c9c9c9" stroke-width="1"/><line x1="0" y1="468.68" x2="24.5" y2="468.68" stroke="#c9c9c9" stroke-width="1"/><line x1="0" y1="482.94" x2="24.5" y2="482.94" stroke="#c9c9c9" stroke-width="1"/><line x1="0" y1="497.20" x2="24.5" y2="497.20" stroke="#c9c9c9" stroke-width="1"/><line x1="0" y1="511.46" x2="24.5" y2="511.46" stroke="#c9c9c9" stroke-width="1"/><line x1="0" y1="525.72" x2="24.5" y2="525.72" stroke="#c9c9c9" stroke-width="1"/><line x1="0" y1="539.98" x2="24.5" y2="539.98" stroke="#c9c9c9" stroke-width="1"/><line x1="0" y1="554.24" x2="24.5" y2="554.24" stroke="#c9c9c9" stroke-width="1"/><line x1="0" y1="568.50" x2="24.5" y2="568.50" stroke="#c9c9c9" stroke-width="1"/><line x1="0" y1="582.76" x2="24.5" y2="582.76" stroke="#c9c9c9" stroke-width="1"/><line x1="0" y1="597.02" x2="24.5" y2="597.02" stroke="#c9c9c9" stroke-width="1"/><line x1="0" y1="611.28" x2="24.5" y2="611.28" stroke="#c9c9c9" stroke-width="1"/><line x1="0" y1="625.54" x2="24.5" y2="625.54" stroke="#c9c9c9" stroke-width="1"/><line x1="0" y1="639.80" x2="24.5" y2="639.80" stroke="#c9c9c9" stroke-width="1"/><line x1="0" y1="654.06" x2="24.5" y2="654.06" stroke="#c9c9c9" stroke-width="1"/><line x1="0" y1="668.32" x2="24.5" y2="668.32" stroke="#c9c9c9" stroke-width="1"/><line x1="0" y1="682.58" x2="24.5" y2="682.58" stroke="#c9c9c9" stroke-width="1"/><line x1="0" y1="696.84" x2="24.5" y2="696.84" stroke="#c9c9c9" stroke-width="1"/><line x1="0" y1="711.10" x2="24.5" y2="711.10" stroke="#c9c9c9" stroke-width="1"/><line x1="0" y1="725.36" x2="24.5" y2="725.36" stroke="#c9c9c9" stroke-width="1"/></svg>
<svg style="left:0px;top:0px;" width="1221" height="779" viewBox="0 0 1221 779"><line x1="24.5" y1="212.0" x2="1201.5" y2="212.0" stroke="#5a5a5a" stroke-width="1.2"/><rect x="22.3" y="211" width="1.6" height="1.6" fill="#217346"/></svg>
<div class="t" style="left:49.41px;top:195px;font-size:11.5px;line-height:16px;color:#3b3b3b;">A</div>
<div class="t" style="left:99.91px;top:195px;font-size:11.5px;line-height:16px;color:#3b3b3b;">B</div>
<div class="t" style="left:230.35px;top:195px;font-size:11.5px;line-height:16px;color:#3b3b3b;">C</div>
<div class="t" style="left:384.10px;top:195px;font-size:11.5px;line-height:16px;color:#3b3b3b;">D</div>
<div class="t" style="left:460.41px;top:195px;font-size:11.5px;line-height:16px;color:#3b3b3b;">E</div>
<div class="t" style="left:523.74px;top:195px;font-size:11.5px;line-height:16px;color:#3b3b3b;">F</div>
<div class="t" style="left:612.53px;top:195px;font-size:11.5px;line-height:16px;color:#3b3b3b;">G</div>
<div class="t" style="left:698.60px;top:195px;font-size:11.5px;line-height:16px;color:#3b3b3b;">H</div>
<div class="t" style="left:760.40px;top:195px;font-size:11.5px;line-height:16px;color:#3b3b3b;">I</div>
<div class="t" style="left:813.62px;top:195px;font-size:11.5px;line-height:16px;color:#3b3b3b;">J</div>
<div class="t" style="left:858.41px;top:195px;font-size:11.5px;line-height:16px;color:#3b3b3b;">K</div>
<div class="t" style="left:926.05px;top:195px;font-size:11.5px;line-height:16px;color:#3b3b3b;">L</div>
<div class="t" style="left:994.71px;top:195px;font-size:11.5px;line-height:16px;color:#3b3b3b;">M</div>
<div class="t" style="left:1040.35px;top:195px;font-size:11.5px;line-height:16px;color:#3b3b3b;">N</div>
<div class="t" style="left:1087.28px;top:195px;font-size:11.5px;line-height:16px;color:#3b3b3b;">O</div>
<div class="t" style="left:1152.41px;top:195px;font-size:11.5px;line-height:16px;color:#3b3b3b;">P</div>
<div class="t" style="left:8.80px;top:211px;font-size:11.5px;line-height:16px;color:#3b3b3b;">1</div>
<div class="t" style="left:8.80px;top:225px;font-size:11.5px;line-height:16px;color:#3b3b3b;">2</div>
<div class="t" style="left:8.80px;top:240px;font-size:11.5px;line-height:16px;color:#3b3b3b;">3</div>
<div class="t" style="left:8.80px;top:254px;font-size:11.5px;line-height:16px;color:#3b3b3b;">4</div>
<div class="t" style="left:8.80px;top:268px;font-size:11.5px;line-height:16px;color:#3b3b3b;">5</div>
<div class="t" style="left:8.80px;top:282px;font-size:11.5px;line-height:16px;color:#3b3b3b;">6</div>
<div class="t" style="left:8.80px;top:297px;font-size:11.5px;line-height:16px;color:#3b3b3b;">7</div>
<div class="t" style="left:8.80px;top:311px;font-size:11.5px;line-height:16px;color:#3b3b3b;">8</div>
<div class="t" style="left:8.80px;top:325px;font-size:11.5px;line-height:16px;color:#3b3b3b;">9</div>
<div class="t" style="left:5.60px;top:339px;font-size:11.5px;line-height:16px;color:#3b3b3b;">10</div>
<div class="t" style="left:6.03px;top:354px;font-size:11.5px;line-height:16px;color:#3b3b3b;">11</div>
<div class="t" style="left:5.60px;top:368px;font-size:11.5px;line-height:16px;color:#3b3b3b;">12</div>
<div class="t" style="left:5.60px;top:382px;font-size:11.5px;line-height:16px;color:#3b3b3b;">13</div>
<div class="t" style="left:5.60px;top:396px;font-size:11.5px;line-height:16px;color:#3b3b3b;">14</div>
<div class="t" style="left:5.60px;top:411px;font-size:11.5px;line-height:16px;color:#3b3b3b;">15</div>
<div class="t" style="left:5.60px;top:425px;font-size:11.5px;line-height:16px;color:#3b3b3b;">16</div>
<div class="t" style="left:5.60px;top:439px;font-size:11.5px;line-height:16px;color:#3b3b3b;">17</div>
<div class="t" style="left:5.60px;top:453px;font-size:11.5px;line-height:16px;color:#3b3b3b;">18</div>
<div class="t" style="left:5.60px;top:468px;font-size:11.5px;line-height:16px;color:#3b3b3b;">19</div>
<div class="t" style="left:5.60px;top:482px;font-size:11.5px;line-height:16px;color:#3b3b3b;">20</div>
<div class="t" style="left:5.60px;top:496px;font-size:11.5px;line-height:16px;color:#3b3b3b;">21</div>
<div class="t" style="left:5.60px;top:511px;font-size:11.5px;line-height:16px;color:#3b3b3b;">22</div>
<div class="t" style="left:5.60px;top:525px;font-size:11.5px;line-height:16px;color:#3b3b3b;">23</div>
<div class="t" style="left:5.60px;top:539px;font-size:11.5px;line-height:16px;color:#3b3b3b;">24</div>
<div class="t" style="left:5.60px;top:553px;font-size:11.5px;line-height:16px;color:#3b3b3b;">25</div>
<div class="t" style="left:5.60px;top:568px;font-size:11.5px;line-height:16px;color:#3b3b3b;">26</div>
<div class="t" style="left:5.60px;top:582px;font-size:11.5px;line-height:16px;color:#3b3b3b;">27</div>
<div class="t" style="left:5.60px;top:596px;font-size:11.5px;line-height:16px;color:#3b3b3b;">28</div>
<div class="t" style="left:5.60px;top:610px;font-size:11.5px;line-height:16px;color:#3b3b3b;">29</div>
<div class="t" style="left:5.60px;top:625px;font-size:11.5px;line-height:16px;color:#3b3b3b;">30</div>
<div class="t" style="left:5.60px;top:639px;font-size:11.5px;line-height:16px;color:#3b3b3b;">31</div>
<div class="t" style="left:5.60px;top:653px;font-size:11.5px;line-height:16px;color:#3b3b3b;">32</div>
<div class="t" style="left:5.60px;top:667px;font-size:11.5px;line-height:16px;color:#3b3b3b;">33</div>
<div class="t" style="left:5.60px;top:682px;font-size:11.5px;line-height:16px;color:#3b3b3b;">34</div>
<div class="t" style="left:5.60px;top:696px;font-size:11.5px;line-height:16px;color:#3b3b3b;">35</div>
<div class="t" style="left:5.60px;top:710px;font-size:11.5px;line-height:16px;color:#3b3b3b;">36</div>
<div class="t" style="left:5.60px;top:724px;font-size:11.5px;line-height:16px;color:#3b3b3b;">37</div>
<div class="t c" style="left:34.65px;top:234px;font-size:9.4px;line-height:13px;color:#111;letter-spacing:0.848px;">Datum*</div>
<div class="t c" style="left:89.35px;top:234px;font-size:9.4px;line-height:13px;color:#111;letter-spacing:0.711px;">Monat</div>
<div class="t c" style="left:194.75px;top:234px;font-size:9.4px;line-height:13px;color:#111;letter-spacing:0.195px;">Zweck / Reiseziel*</div>
<div class="t c" style="left:369.40px;top:213px;font-size:9.4px;line-height:13px;color:#111;letter-spacing:0.120px;">An- oder</div>
<div class="t c" style="left:351.05px;top:228px;font-size:9.4px;line-height:13px;color:#111;letter-spacing:0.349px;">Abreisetag einer</div>
<div class="t c" style="left:359.70px;top:242px;font-size:9.4px;line-height:13px;color:#111;letter-spacing:0.408px;">mehrtägigen</div>
<div class="t c" style="left:362.30px;top:256px;font-size:9.4px;line-height:13px;color:#111;letter-spacing:0.411px;">Dienstreise</div>
<div class="t c" style="left:441.10px;top:213px;font-size:9.4px;line-height:13px;color:#111;letter-spacing:0.104px;">Anfang der</div>
<div class="t c" style="left:439.00px;top:228px;font-size:9.4px;line-height:13px;color:#111;letter-spacing:0.411px;">Dienstreise</div>
<div class="t c" style="left:508.05px;top:213px;font-size:9.4px;line-height:13px;color:#111;letter-spacing:0.036px;">Ende der</div>
<div class="t c" style="left:501.70px;top:228px;font-size:9.4px;line-height:13px;color:#111;letter-spacing:0.411px;">Dienstreise</div>
<div class="t c" style="left:436.95px;top:242px;font-size:9.4px;line-height:13px;color:#111;letter-spacing:0.248px;">(als Dezimalzahl eingeben</div>
<div class="t c" style="left:463.60px;top:256px;font-size:9.4px;line-height:13px;color:#111;letter-spacing:0.177px;">/ 08:15 = 8,25)</div>
<div class="t c" style="left:564.25px;top:220px;font-size:9.4px;line-height:13px;color:#111;letter-spacing:0.210px;">Nacht-Schicht? (Wählen</div>
<div class="t c" style="left:562.00px;top:234px;font-size:9.4px;line-height:13px;color:#111;letter-spacing:0.045px;">Sie Ja aus, wenn Sie über</div>
<div class="t c" style="left:566.90px;top:249px;font-size:9.4px;line-height:13px;color:#111;letter-spacing:0.553px;">Mitternacht arbeiten.)</div>
<div class="t c" style="left:683.75px;top:227px;font-size:9.4px;line-height:13px;color:#111;letter-spacing:0.295px;">Dauer in</div>
<div class="t c" style="left:683.75px;top:241px;font-size:9.4px;line-height:13px;color:#111;letter-spacing:0.429px;">Stunden</div>
<div class="t c" style="left:750.60px;top:234px;font-size:9.4px;line-height:13px;color:#111;letter-spacing:0.315px;">Land</div>
<div class="t c" style="left:814.10px;top:227px;font-size:9.4px;line-height:13px;color:#111;letter-spacing:0.249px;">Verpfl.-Satz</div>
<div class="t c" style="left:813.49px;top:256px;font-size:9.4px;line-height:13px;color:#111;letter-spacing:0.300px;">1</div>
<div class="t c" style="left:858.99px;top:256px;font-size:9.4px;line-height:13px;color:#111;letter-spacing:0.300px;">2</div>
<div class="t c" style="left:894.85px;top:220px;font-size:9.4px;line-height:13px;color:#111;letter-spacing:0.233px;">Tagessatz ohne</div>
<div class="t c" style="left:891.25px;top:234px;font-size:9.4px;line-height:13px;color:#111;letter-spacing:0.300px;">Berücksichtigung</div>
<div class="t c" style="left:896.15px;top:249px;font-size:9.4px;line-height:13px;color:#111;letter-spacing:0.355px;">der Mahlzeiten</div>
<div class="t c" style="left:997.95px;top:227px;font-size:9.4px;line-height:13px;color:#111;letter-spacing:0.509px;">erhaltene Mahlzeiten</div>
<div class="t c" style="left:978.00px;top:256px;font-size:9.4px;line-height:13px;color:#111;letter-spacing:0.280px;">Frühstück</div>
<div class="t c" style="left:1030.45px;top:256px;font-size:9.4px;line-height:13px;color:#111;letter-spacing:0.834px;">Mittag</div>
<div class="t c" style="left:1068.45px;top:256px;font-size:9.4px;line-height:13px;color:#111;letter-spacing:0.455px;">Abendbrot</div>
<div class="t c" style="left:1136.25px;top:220px;font-size:9.4px;line-height:13px;color:#111;letter-spacing:0.532px;">Wert der</div>
<div class="t c" style="left:1131.25px;top:234px;font-size:9.4px;line-height:13px;color:#111;letter-spacing:0.577px;">erhaltenen</div>
<div class="t c" style="left:1131.25px;top:249px;font-size:9.4px;line-height:13px;color:#111;letter-spacing:0.463px;">Mahlzeiten</div>
<div class="t c" style="left:29.00px;top:270px;font-size:9.4px;line-height:13px;color:#111;letter-spacing:0.431px;">15.01.2018</div>
<div class="t c" style="left:101.14px;top:270px;font-size:9.4px;line-height:13px;color:#111;letter-spacing:0.300px;">1</div>
<div class="t c" style="left:128.60px;top:270px;font-size:9.4px;line-height:13px;color:#111;letter-spacing:0.221px;">Nürnberg / Projekt 1 / Besprechung Konzeption</div>
<div class="t c" style="left:378.55px;top:270px;font-size:9.4px;line-height:13px;color:#111;letter-spacing:0.240px;">Nein</div>
<div class="t c" style="left:473.60px;top:270px;font-size:9.4px;line-height:13px;color:#111;letter-spacing:0.351px;">7,00</div>
<div class="t c" style="left:531.40px;top:270px;font-size:9.4px;line-height:13px;color:#111;letter-spacing:0.385px;">16,00</div>
<div class="t c" style="left:693.10px;top:270px;font-size:9.4px;line-height:13px;color:#111;letter-spacing:0.351px;">9,00</div>
<div class="t c" style="left:733.10px;top:270px;font-size:9.4px;line-height:13px;color:#111;letter-spacing:0.408px;">Deutschland</div>
<div class="t c" style="left:802.10px;top:270px;font-size:9.4px;line-height:13px;color:#111;letter-spacing:0.070px;">12,00 €</div>
<div class="t c" style="left:847.60px;top:270px;font-size:9.4px;line-height:13px;color:#111;letter-spacing:0.070px;">24,00 €</div>
<div class="t c" style="left:936.10px;top:270px;font-size:9.4px;line-height:13px;color:#111;letter-spacing:0.070px;">12,00 €</div>
<div class="t c" style="left:989.50px;top:270px;font-size:9.4px;line-height:13px;color:#111;letter-spacing:0.240px;">Nein</div>
<div class="t c" style="left:1034.50px;top:270px;font-size:9.4px;line-height:13px;color:#111;letter-spacing:0.240px;">Nein</div>
<div class="t c" style="left:1081.75px;top:270px;font-size:9.4px;line-height:13px;color:#111;letter-spacing:0.240px;">Nein</div>
<div class="t c" style="left:1165.34px;top:270px;font-size:9.4px;line-height:13px;color:#111;letter-spacing:0.300px;">-</div>
<div class="t c" style="left:1181.69px;top:270px;font-size:9.4px;line-height:13px;color:#111;letter-spacing:0.300px;">€</div>
<div class="t c" style="left:29.00px;top:284px;font-size:9.4px;line-height:13px;color:#111;letter-spacing:0.431px;">15.03.2018</div>
<div class="t c" style="left:101.14px;top:284px;font-size:9.4px;line-height:13px;color:#111;letter-spacing:0.300px;">3</div>
<div class="t c" style="left:128.60px;top:284px;font-size:9.4px;line-height:13px;color:#111;letter-spacing:0.198px;">Nürnberg / Projekt 1 / Besprechung Umsetzung</div>
<div class="t c" style="left:383.75px;top:284px;font-size:9.4px;line-height:13px;color:#111;letter-spacing:-0.300px;">Ja</div>
<div class="t c" style="left:607.30px;top:284px;font-size:9.4px;line-height:13px;color:#111;letter-spacing:0.240px;">Nein</div>
<div class="t c" style="left:692.85px;top:284px;font-size:9.4px;line-height:13px;color:#111;letter-spacing:0.518px;">0,00</div>
<div class="t c" style="left:733.10px;top:284px;font-size:9.4px;line-height:13px;color:#111;letter-spacing:0.408px;">Deutschland</div>
<div class="t c" style="left:802.10px;top:284px;font-size:9.4px;line-height:13px;color:#111;letter-spacing:0.070px;">12,00 €</div>
<div class="t c" style="left:847.60px;top:284px;font-size:9.4px;line-height:13px;color:#111;letter-spacing:0.070px;">24,00 €</div>
<div class="t c" style="left:936.10px;top:284px;font-size:9.4px;line-height:13px;color:#111;letter-spacing:0.070px;">12,00 €</div>
<div class="t c" style="left:989.50px;top:284px;font-size:9.4px;line-height:13px;color:#111;letter-spacing:0.240px;">Nein</div>
<div class="t c" style="left:1034.50px;top:284px;font-size:9.4px;line-height:13px;color:#111;letter-spacing:0.240px;">Nein</div>
<div class="t c" style="left:1081.75px;top:284px;font-size:9.4px;line-height:13px;color:#111;letter-spacing:0.240px;">Nein</div>
<div class="t c" style="left:1165.34px;top:284px;font-size:9.4px;line-height:13px;color:#111;letter-spacing:0.300px;">-</div>
<div class="t c" style="left:1181.69px;top:284px;font-size:9.4px;line-height:13px;color:#111;letter-spacing:0.300px;">€</div>
<div class="t c" style="left:29.00px;top:299px;font-size:9.4px;line-height:13px;color:#111;letter-spacing:0.431px;">16.03.2018</div>
<div class="t c" style="left:101.14px;top:299px;font-size:9.4px;line-height:13px;color:#111;letter-spacing:0.300px;">3</div>
<div class="t c" style="left:128.60px;top:299px;font-size:9.4px;line-height:13px;color:#111;letter-spacing:0.198px;">Nürnberg / Projekt 1 / Besprechung Umsetzung</div>
<div class="t c" style="left:383.75px;top:299px;font-size:9.4px;line-height:13px;color:#111;letter-spacing:-0.300px;">Ja</div>
<div class="t c" style="left:607.30px;top:299px;font-size:9.4px;line-height:13px;color:#111;letter-spacing:0.240px;">Nein</div>
<div class="t c" style="left:692.85px;top:299px;font-size:9.4px;line-height:13px;color:#111;letter-spacing:0.518px;">0,00</div>
<div class="t c" style="left:733.10px;top:299px;font-size:9.4px;line-height:13px;color:#111;letter-spacing:0.408px;">Deutschland</div>
<div class="t c" style="left:802.10px;top:299px;font-size:9.4px;line-height:13px;color:#111;letter-spacing:0.070px;">12,00 €</div>
<div class="t c" style="left:847.60px;top:299px;font-size:9.4px;line-height:13px;color:#111;letter-spacing:0.070px;">24,00 €</div>
<div class="t c" style="left:936.10px;top:299px;font-size:9.4px;line-height:13px;color:#111;letter-spacing:0.070px;">12,00 €</div>
<div class="t c" style="left:989.50px;top:299px;font-size:9.4px;line-height:13px;color:#111;letter-spacing:0.240px;">Nein</div>
<div class="t c" style="left:1034.50px;top:299px;font-size:9.4px;line-height:13px;color:#111;letter-spacing:0.240px;">Nein</div>
<div class="t c" style="left:1081.75px;top:299px;font-size:9.4px;line-height:13px;color:#111;letter-spacing:0.240px;">Nein</div>
<div class="t c" style="left:1165.34px;top:299px;font-size:9.4px;line-height:13px;color:#111;letter-spacing:0.300px;">-</div>
<div class="t c" style="left:1181.69px;top:299px;font-size:9.4px;line-height:13px;color:#111;letter-spacing:0.300px;">€</div>
<div class="t c" style="left:29.00px;top:313px;font-size:9.4px;line-height:13px;color:#111;letter-spacing:0.431px;">15.10.2018</div>
<div class="t c" style="left:98.39px;top:313px;font-size:9.4px;line-height:13px;color:#111;letter-spacing:0.300px;">10</div>
<div class="t c" style="left:128.60px;top:313px;font-size:9.4px;line-height:13px;color:#111;letter-spacing:0.140px;">Erfurt / Akquisegespräch für IT-Schulung</div>
<div class="t c" style="left:378.55px;top:313px;font-size:9.4px;line-height:13px;color:#111;letter-spacing:0.240px;">Nein</div>
<div class="t c" style="left:473.60px;top:313px;font-size:9.4px;line-height:13px;color:#111;letter-spacing:0.351px;">9,00</div>
<div class="t c" style="left:531.40px;top:313px;font-size:9.4px;line-height:13px;color:#111;letter-spacing:0.385px;">15,00</div>
<div class="t c" style="left:607.30px;top:313px;font-size:9.4px;line-height:13px;color:#111;letter-spacing:0.240px;">Nein</div>
<div class="t c" style="left:693.10px;top:313px;font-size:9.4px;line-height:13px;color:#111;letter-spacing:0.351px;">6,00</div>
<div class="t c" style="left:733.10px;top:313px;font-size:9.4px;line-height:13px;color:#111;letter-spacing:0.408px;">Deutschland</div>
<div class="t c" style="left:802.10px;top:313px;font-size:9.4px;line-height:13px;color:#111;letter-spacing:0.070px;">12,00 €</div>
<div class="t c" style="left:847.60px;top:313px;font-size:9.4px;line-height:13px;color:#111;letter-spacing:0.070px;">24,00 €</div>
<div class="t c" style="left:946.34px;top:313px;font-size:9.4px;line-height:13px;color:#111;letter-spacing:0.300px;">-</div>
<div class="t c" style="left:962.69px;top:313px;font-size:9.4px;line-height:13px;color:#111;letter-spacing:0.300px;">€</div>
<div class="t c" style="left:989.50px;top:313px;font-size:9.4px;line-height:13px;color:#111;letter-spacing:0.240px;">Nein</div>
<div class="t c" style="left:1034.50px;top:313px;font-size:9.4px;line-height:13px;color:#111;letter-spacing:0.240px;">Nein</div>
<div class="t c" style="left:1081.75px;top:313px;font-size:9.4px;line-height:13px;color:#111;letter-spacing:0.240px;">Nein</div>
<div class="t c" style="left:1165.34px;top:313px;font-size:9.4px;line-height:13px;color:#111;letter-spacing:0.300px;">-</div>
<div class="t c" style="left:1181.69px;top:313px;font-size:9.4px;line-height:13px;color:#111;letter-spacing:0.300px;">€</div>
<div class="t c" style="left:29.00px;top:327px;font-size:9.4px;line-height:13px;color:#111;letter-spacing:0.431px;">20.10.2018</div>
<div class="t c" style="left:98.39px;top:327px;font-size:9.4px;line-height:13px;color:#111;letter-spacing:0.300px;">10</div>
<div class="t c" style="left:128.60px;top:327px;font-size:9.4px;line-height:13px;color:#111;letter-spacing:0.337px;">Wien / Seminar "Denken wie ein Unternehmer"</div>
<div class="t c" style="left:378.55px;top:327px;font-size:9.4px;line-height:13px;color:#111;letter-spacing:0.240px;">Nein</div>
<div class="t c" style="left:473.60px;top:327px;font-size:9.4px;line-height:13px;color:#111;letter-spacing:0.351px;">3,00</div>
<div class="t c" style="left:531.40px;top:327px;font-size:9.4px;line-height:13px;color:#111;letter-spacing:0.385px;">21,00</div>
<div class="t c" style="left:690.25px;top:327px;font-size:9.4px;line-height:13px;color:#111;letter-spacing:0.385px;">18,00</div>
<div class="t c" style="left:733.10px;top:327px;font-size:9.4px;line-height:13px;color:#111;letter-spacing:0.384px;">Österreich</div>
<div class="t c" style="left:802.10px;top:327px;font-size:9.4px;line-height:13px;color:#111;letter-spacing:0.070px;">24,00 €</div>
<div class="t c" style="left:847.60px;top:327px;font-size:9.4px;line-height:13px;color:#111;letter-spacing:0.070px;">36,00 €</div>
<div class="t c" style="left:936.10px;top:327px;font-size:9.4px;line-height:13px;color:#111;letter-spacing:0.070px;">24,00 €</div>
<div class="t c" style="left:989.50px;top:327px;font-size:9.4px;line-height:13px;color:#111;letter-spacing:0.240px;">Nein</div>
<div class="t c" style="left:1039.70px;top:327px;font-size:9.4px;line-height:13px;color:#111;letter-spacing:-0.300px;">Ja</div>
<div class="t c" style="left:1081.75px;top:327px;font-size:9.4px;line-height:13px;color:#111;letter-spacing:0.240px;">Nein</div>
<div class="t c" style="left:1153.80px;top:327px;font-size:9.4px;line-height:13px;color:#111;letter-spacing:0.287px;">14,40 €</div>
<div class="t c" style="left:29.00px;top:341px;font-size:9.4px;line-height:13px;color:#111;letter-spacing:0.508px;">06.11.2018</div>
<div class="t c" style="left:98.73px;top:341px;font-size:9.4px;line-height:13px;color:#111;letter-spacing:0.300px;">11</div>
<div class="t c" style="left:128.60px;top:341px;font-size:9.4px;line-height:13px;color:#111;letter-spacing:0.154px;">Erfurt / Durchführung IT-Schulung</div>
<div class="t c" style="left:383.75px;top:341px;font-size:9.4px;line-height:13px;color:#111;letter-spacing:-0.300px;">Ja</div>
<div class="t c" style="left:607.30px;top:341px;font-size:9.4px;line-height:13px;color:#111;letter-spacing:0.240px;">Nein</div>
<div class="t c" style="left:692.85px;top:341px;font-size:9.4px;line-height:13px;color:#111;letter-spacing:0.518px;">0,00</div>
<div class="t c" style="left:733.10px;top:341px;font-size:9.4px;line-height:13px;color:#111;letter-spacing:0.408px;">Deutschland</div>
<div class="t c" style="left:802.10px;top:341px;font-size:9.4px;line-height:13px;color:#111;letter-spacing:0.070px;">12,00 €</div>
<div class="t c" style="left:847.60px;top:341px;font-size:9.4px;line-height:13px;color:#111;letter-spacing:0.070px;">24,00 €</div>
<div class="t c" style="left:936.10px;top:341px;font-size:9.4px;line-height:13px;color:#111;letter-spacing:0.070px;">12,00 €</div>
<div class="t c" style="left:989.50px;top:341px;font-size:9.4px;line-height:13px;color:#111;letter-spacing:0.240px;">Nein</div>
<div class="t c" style="left:1034.50px;top:341px;font-size:9.4px;line-height:13px;color:#111;letter-spacing:0.240px;">Nein</div>
<div class="t c" style="left:1081.75px;top:341px;font-size:9.4px;line-height:13px;color:#111;letter-spacing:0.240px;">Nein</div>
<div class="t c" style="left:1165.34px;top:341px;font-size:9.4px;line-height:13px;color:#111;letter-spacing:0.300px;">-</div>
<div class="t c" style="left:1181.69px;top:341px;font-size:9.4px;line-height:13px;color:#111;letter-spacing:0.300px;">€</div>
<div class="t c" style="left:29.00px;top:356px;font-size:9.4px;line-height:13px;color:#111;letter-spacing:0.508px;">07.11.2018</div>
<div class="t c" style="left:98.73px;top:356px;font-size:9.4px;line-height:13px;color:#111;letter-spacing:0.300px;">11</div>
<div class="t c" style="left:128.60px;top:356px;font-size:9.4px;line-height:13px;color:#111;letter-spacing:0.154px;">Erfurt / Durchführung IT-Schulung</div>
<div class="t c" style="left:378.55px;top:356px;font-size:9.4px;line-height:13px;color:#111;letter-spacing:0.240px;">Nein</div>
<div class="t c" style="left:473.10px;top:356px;font-size:9.4px;line-height:13px;color:#111;letter-spacing:0.518px;">0,00</div>
<div class="t c" style="left:531.40px;top:356px;font-size:9.4px;line-height:13px;color:#111;letter-spacing:0.385px;">24,00</div>
<div class="t c" style="left:607.30px;top:356px;font-size:9.4px;line-height:13px;color:#111;letter-spacing:0.240px;">Nein</div>
<div class="t c" style="left:690.25px;top:356px;font-size:9.4px;line-height:13px;color:#111;letter-spacing:0.385px;">24,00</div>
<div class="t c" style="left:733.10px;top:356px;font-size:9.4px;line-height:13px;color:#111;letter-spacing:0.408px;">Deutschland</div>
<div class="t c" style="left:802.10px;top:356px;font-size:9.4px;line-height:13px;color:#111;letter-spacing:0.070px;">12,00 €</div>
<div class="t c" style="left:847.60px;top:356px;font-size:9.4px;line-height:13px;color:#111;letter-spacing:0.070px;">24,00 €</div>
<div class="t c" style="left:936.10px;top:356px;font-size:9.4px;line-height:13px;color:#111;letter-spacing:0.070px;">24,00 €</div>
<div class="t c" style="left:989.50px;top:356px;font-size:9.4px;line-height:13px;color:#111;letter-spacing:0.240px;">Nein</div>
<div class="t c" style="left:1034.50px;top:356px;font-size:9.4px;line-height:13px;color:#111;letter-spacing:0.240px;">Nein</div>
<div class="t c" style="left:1081.75px;top:356px;font-size:9.4px;line-height:13px;color:#111;letter-spacing:0.240px;">Nein</div>
<div class="t c" style="left:1165.34px;top:356px;font-size:9.4px;line-height:13px;color:#111;letter-spacing:0.300px;">-</div>
<div class="t c" style="left:1181.69px;top:356px;font-size:9.4px;line-height:13px;color:#111;letter-spacing:0.300px;">€</div>
<div class="t c" style="left:29.00px;top:370px;font-size:9.4px;line-height:13px;color:#111;letter-spacing:0.508px;">08.11.2018</div>
<div class="t c" style="left:98.73px;top:370px;font-size:9.4px;line-height:13px;color:#111;letter-spacing:0.300px;">11</div>
<div class="t c" style="left:128.60px;top:370px;font-size:9.4px;line-height:13px;color:#111;letter-spacing:0.154px;">Erfurt / Durchführung IT-Schulung</div>
<div class="t c" style="left:383.75px;top:370px;font-size:9.4px;line-height:13px;color:#111;letter-spacing:-0.300px;">Ja</div>
<div class="t c" style="left:607.30px;top:370px;font-size:9.4px;line-height:13px;color:#111;letter-spacing:0.240px;">Nein</div>
<div class="t c" style="left:692.85px;top:370px;font-size:9.4px;line-height:13px;color:#111;letter-spacing:0.518px;">0,00</div>
<div class="t c" style="left:733.10px;top:370px;font-size:9.4px;line-height:13px;color:#111;letter-spacing:0.408px;">Deutschland</div>
<div class="t c" style="left:802.10px;top:370px;font-size:9.4px;line-height:13px;color:#111;letter-spacing:0.070px;">12,00 €</div>
<div class="t c" style="left:847.60px;top:370px;font-size:9.4px;line-height:13px;color:#111;letter-spacing:0.070px;">24,00 €</div>
<div class="t c" style="left:936.10px;top:370px;font-size:9.4px;line-height:13px;color:#111;letter-spacing:0.070px;">12,00 €</div>
<div class="t c" style="left:989.50px;top:370px;font-size:9.4px;line-height:13px;color:#111;letter-spacing:0.240px;">Nein</div>
<div class="t c" style="left:1034.50px;top:370px;font-size:9.4px;line-height:13px;color:#111;letter-spacing:0.240px;">Nein</div>
<div class="t c" style="left:1081.75px;top:370px;font-size:9.4px;line-height:13px;color:#111;letter-spacing:0.240px;">Nein</div>
<div class="t c" style="left:1165.34px;top:370px;font-size:9.4px;line-height:13px;color:#111;letter-spacing:0.300px;">-</div>
<div class="t c" style="left:1181.69px;top:370px;font-size:9.4px;line-height:13px;color:#111;letter-spacing:0.300px;">€</div>
<div class="t c" style="left:101.14px;top:384px;font-size:9.4px;line-height:13px;color:#111;letter-spacing:0.300px;">0</div>
<div class="t c" style="left:692.85px;top:384px;font-size:9.4px;line-height:13px;color:#111;letter-spacing:0.518px;">0,00</div>
<div class="t c" style="left:812.34px;top:384px;font-size:9.4px;line-height:13px;color:#111;letter-spacing:0.300px;">-</div>
<div class="t c" style="left:828.69px;top:384px;font-size:9.4px;line-height:13px;color:#111;letter-spacing:0.300px;">€</div>
<div class="t c" style="left:857.84px;top:384px;font-size:9.4px;line-height:13px;color:#111;letter-spacing:0.300px;">-</div>
<div class="t c" style="left:874.19px;top:384px;font-size:9.4px;line-height:13px;color:#111;letter-spacing:0.300px;">€</div>
<div class="t c" style="left:946.34px;top:384px;font-size:9.4px;line-height:13px;color:#111;letter-spacing:0.300px;">-</div>
<div class="t c" style="left:962.69px;top:384px;font-size:9.4px;line-height:13px;color:#111;letter-spacing:0.300px;">€</div>
<div class="t c" style="left:1165.34px;top:384px;font-size:9.4px;line-height:13px;color:#111;letter-spacing:0.300px;">-</div>
<div class="t c" style="left:1181.69px;top:384px;font-size:9.4px;line-height:13px;color:#111;letter-spacing:0.300px;">€</div>
<div class="t c" style="left:101.14px;top:398px;font-size:9.4px;line-height:13px;color:#111;letter-spacing:0.300px;">0</div>
<div class="t c" style="left:692.85px;top:398px;font-size:9.4px;line-height:13px;color:#111;letter-spacing:0.518px;">0,00</div>
<div class="t c" style="left:812.34px;top:398px;font-size:9.4px;line-height:13px;color:#111;letter-spacing:0.300px;">-</div>
<div class="t c" style="left:828.69px;top:398px;font-size:9.4px;line-height:13px;color:#111;letter-spacing:0.300px;">€</div>
<div class="t c" style="left:857.84px;top:398px;font-size:9.4px;line-height:13px;color:#111;letter-spacing:0.300px;">-</div>
<div class="t c" style="left:874.19px;top:398px;font-size:9.4px;line-height:13px;color:#111;letter-spacing:0.300px;">€</div>
<div class="t c" style="left:946.34px;top:398px;font-size:9.4px;line-height:13px;color:#111;letter-spacing:0.300px;">-</div>
<div class="t c" style="left:962.69px;top:398px;font-size:9.4px;line-height:13px;color:#111;letter-spacing:0.300px;">€</div>
<div class="t c" style="left:1165.34px;top:398px;font-size:9.4px;line-height:13px;color:#111;letter-spacing:0.300px;">-</div>
<div class="t c" style="left:1181.69px;top:398px;font-size:9.4px;line-height:13px;color:#111;letter-spacing:0.300px;">€</div>
<div class="t c" style="left:101.14px;top:413px;font-size:9.4px;line-height:13px;color:#111;letter-spacing:0.300px;">0</div>
<div class="t c" style="left:692.85px;top:413px;font-size:9.4px;line-height:13px;color:#111;letter-spacing:0.518px;">0,00</div>
<div class="t c" style="left:812.34px;top:413px;font-size:9.4px;line-height:13px;color:#111;letter-spacing:0.300px;">-</div>
<div class="t c" style="left:828.69px;top:413px;font-size:9.4px;line-height:13px;color:#111;letter-spacing:0.300px;">€</div>
<div class="t c" style="left:857.84px;top:413px;font-size:9.4px;line-height:13px;color:#111;letter-spacing:0.300px;">-</div>
<div class="t c" style="left:874.19px;top:413px;font-size:9.4px;line-height:13px;color:#111;letter-spacing:0.300px;">€</div>
<div class="t c" style="left:946.34px;top:413px;font-size:9.4px;line-height:13px;color:#111;letter-spacing:0.300px;">-</div>
<div class="t c" style="left:962.69px;top:413px;font-size:9.4px;line-height:13px;color:#111;letter-spacing:0.300px;">€</div>
<div class="t c" style="left:1165.34px;top:413px;font-size:9.4px;line-height:13px;color:#111;letter-spacing:0.300px;">-</div>
<div class="t c" style="left:1181.69px;top:413px;font-size:9.4px;line-height:13px;color:#111;letter-spacing:0.300px;">€</div>
<div class="t c" style="left:101.14px;top:427px;font-size:9.4px;line-height:13px;color:#111;letter-spacing:0.300px;">0</div>
<div class="t c" style="left:692.85px;top:427px;font-size:9.4px;line-height:13px;color:#111;letter-spacing:0.518px;">0,00</div>
<div class="t c" style="left:812.34px;top:427px;font-size:9.4px;line-height:13px;color:#111;letter-spacing:0.300px;">-</div>
<div class="t c" style="left:828.69px;top:427px;font-size:9.4px;line-height:13px;color:#111;letter-spacing:0.300px;">€</div>
<div class="t c" style="left:857.84px;top:427px;font-size:9.4px;line-height:13px;color:#111;letter-spacing:0.300px;">-</div>
<div class="t c" style="left:874.19px;top:427px;font-size:9.4px;line-height:13px;color:#111;letter-spacing:0.300px;">€</div>
<div class="t c" style="left:946.34px;top:427px;font-size:9.4px;line-height:13px;color:#111;letter-spacing:0.300px;">-</div>
<div class="t c" style="left:962.69px;top:427px;font-size:9.4px;line-height:13px;color:#111;letter-spacing:0.300px;">€</div>
<div class="t c" style="left:1165.34px;top:427px;font-size:9.4px;line-height:13px;color:#111;letter-spacing:0.300px;">-</div>
<div class="t c" style="left:1181.69px;top:427px;font-size:9.4px;line-height:13px;color:#111;letter-spacing:0.300px;">€</div>
<div class="t c" style="left:101.14px;top:441px;font-size:9.4px;line-height:13px;color:#111;letter-spacing:0.300px;">0</div>
<div class="t c" style="left:692.85px;top:441px;font-size:9.4px;line-height:13px;color:#111;letter-spacing:0.518px;">0,00</div>
<div class="t c" style="left:812.34px;top:441px;font-size:9.4px;line-height:13px;color:#111;letter-spacing:0.300px;">-</div>
<div class="t c" style="left:828.69px;top:441px;font-size:9.4px;line-height:13px;color:#111;letter-spacing:0.300px;">€</div>
<div class="t c" style="left:857.84px;top:441px;font-size:9.4px;line-height:13px;color:#111;letter-spacing:0.300px;">-</div>
<div class="t c" style="left:874.19px;top:441px;font-size:9.4px;line-height:13px;color:#111;letter-spacing:0.300px;">€</div>
<div class="t c" style="left:946.34px;top:441px;font-size:9.4px;line-height:13px;color:#111;letter-spacing:0.300px;">-</div>
<div class="t c" style="left:962.69px;top:441px;font-size:9.4px;line-height:13px;color:#111;letter-spacing:0.300px;">€</div>
<div class="t c" style="left:1165.34px;top:441px;font-size:9.4px;line-height:13px;color:#111;letter-spacing:0.300px;">-</div>
<div class="t c" style="left:1181.69px;top:441px;font-size:9.4px;line-height:13px;color:#111;letter-spacing:0.300px;">€</div>
<div class="t c" style="left:101.14px;top:455px;font-size:9.4px;line-height:13px;color:#111;letter-spacing:0.300px;">0</div>
<div class="t c" style="left:692.85px;top:455px;font-size:9.4px;line-height:13px;color:#111;letter-spacing:0.518px;">0,00</div>
<div class="t c" style="left:812.34px;top:455px;font-size:9.4px;line-height:13px;color:#111;letter-spacing:0.300px;">-</div>
<div class="t c" style="left:828.69px;top:455px;font-size:9.4px;line-height:13px;color:#111;letter-spacing:0.300px;">€</div>
<div class="t c" style="left:857.84px;top:455px;font-size:9.4px;line-height:13px;color:#111;letter-spacing:0.300px;">-</div>
<div class="t c" style="left:874.19px;top:455px;font-size:9.4px;line-height:13px;color:#111;letter-spacing:0.300px;">€</div>
<div class="t c" style="left:946.34px;top:455px;font-size:9.4px;line-height:13px;color:#111;letter-spacing:0.300px;">-</div>
<div class="t c" style="left:962.69px;top:455px;font-size:9.4px;line-height:13px;color:#111;letter-spacing:0.300px;">€</div>
<div class="t c" style="left:1165.34px;top:455px;font-size:9.4px;line-height:13px;color:#111;letter-spacing:0.300px;">-</div>
<div class="t c" style="left:1181.69px;top:455px;font-size:9.4px;line-height:13px;color:#111;letter-spacing:0.300px;">€</div>
<div class="t c" style="left:101.14px;top:470px;font-size:9.4px;line-height:13px;color:#111;letter-spacing:0.300px;">0</div>
<div class="t c" style="left:692.85px;top:470px;font-size:9.4px;line-height:13px;color:#111;letter-spacing:0.518px;">0,00</div>
<div class="t c" style="left:812.34px;top:470px;font-size:9.4px;line-height:13px;color:#111;letter-spacing:0.300px;">-</div>
<div class="t c" style="left:828.69px;top:470px;font-size:9.4px;line-height:13px;color:#111;letter-spacing:0.300px;">€</div>
<div class="t c" style="left:857.84px;top:470px;font-size:9.4px;line-height:13px;color:#111;letter-spacing:0.300px;">-</div>
<div class="t c" style="left:874.19px;top:470px;font-size:9.4px;line-height:13px;color:#111;letter-spacing:0.300px;">€</div>
<div class="t c" style="left:946.34px;top:470px;font-size:9.4px;line-height:13px;color:#111;letter-spacing:0.300px;">-</div>
<div class="t c" style="left:962.69px;top:470px;font-size:9.4px;line-height:13px;color:#111;letter-spacing:0.300px;">€</div>
<div class="t c" style="left:1165.34px;top:470px;font-size:9.4px;line-height:13px;color:#111;letter-spacing:0.300px;">-</div>
<div class="t c" style="left:1181.69px;top:470px;font-size:9.4px;line-height:13px;color:#111;letter-spacing:0.300px;">€</div>
<div class="t c" style="left:101.14px;top:484px;font-size:9.4px;line-height:13px;color:#111;letter-spacing:0.300px;">0</div>
<div class="t c" style="left:692.85px;top:484px;font-size:9.4px;line-height:13px;color:#111;letter-spacing:0.518px;">0,00</div>
<div class="t c" style="left:812.34px;top:484px;font-size:9.4px;line-height:13px;color:#111;letter-spacing:0.300px;">-</div>
<div class="t c" style="left:828.69px;top:484px;font-size:9.4px;line-height:13px;color:#111;letter-spacing:0.300px;">€</div>
<div class="t c" style="left:857.84px;top:484px;font-size:9.4px;line-height:13px;color:#111;letter-spacing:0.300px;">-</div>
<div class="t c" style="left:874.19px;top:484px;font-size:9.4px;line-height:13px;color:#111;letter-spacing:0.300px;">€</div>
<div class="t c" style="left:946.34px;top:484px;font-size:9.4px;line-height:13px;color:#111;letter-spacing:0.300px;">-</div>
<div class="t c" style="left:962.69px;top:484px;font-size:9.4px;line-height:13px;color:#111;letter-spacing:0.300px;">€</div>
<div class="t c" style="left:1165.34px;top:484px;font-size:9.4px;line-height:13px;color:#111;letter-spacing:0.300px;">-</div>
<div class="t c" style="left:1181.69px;top:484px;font-size:9.4px;line-height:13px;color:#111;letter-spacing:0.300px;">€</div>
<div class="t c" style="left:101.14px;top:498px;font-size:9.4px;line-height:13px;color:#111;letter-spacing:0.300px;">0</div>
<div class="t c" style="left:692.85px;top:498px;font-size:9.4px;line-height:13px;color:#111;letter-spacing:0.518px;">0,00</div>
<div class="t c" style="left:812.34px;top:498px;font-size:9.4px;line-height:13px;color:#111;letter-spacing:0.300px;">-</div>
<div class="t c" style="left:828.69px;top:498px;font-size:9.4px;line-height:13px;color:#111;letter-spacing:0.300px;">€</div>
<div class="t c" style="left:857.84px;top:498px;font-size:9.4px;line-height:13px;color:#111;letter-spacing:0.300px;">-</div>
<div class="t c" style="left:874.19px;top:498px;font-size:9.4px;line-height:13px;color:#111;letter-spacing:0.300px;">€</div>
<div class="t c" style="left:946.34px;top:498px;font-size:9.4px;line-height:13px;color:#111;letter-spacing:0.300px;">-</div>
<div class="t c" style="left:962.69px;top:498px;font-size:9.4px;line-height:13px;color:#111;letter-spacing:0.300px;">€</div>
<div class="t c" style="left:1165.34px;top:498px;font-size:9.4px;line-height:13px;color:#111;letter-spacing:0.300px;">-</div>
<div class="t c" style="left:1181.69px;top:498px;font-size:9.4px;line-height:13px;color:#111;letter-spacing:0.300px;">€</div>
<div class="t c" style="left:101.14px;top:512px;font-size:9.4px;line-height:13px;color:#111;letter-spacing:0.300px;">0</div>
<div class="t c" style="left:692.85px;top:512px;font-size:9.4px;line-height:13px;color:#111;letter-spacing:0.518px;">0,00</div>
<div class="t c" style="left:812.34px;top:512px;font-size:9.4px;line-height:13px;color:#111;letter-spacing:0.300px;">-</div>
<div class="t c" style="left:828.69px;top:512px;font-size:9.4px;line-height:13px;color:#111;letter-spacing:0.300px;">€</div>
<div class="t c" style="left:857.84px;top:512px;font-size:9.4px;line-height:13px;color:#111;letter-spacing:0.300px;">-</div>
<div class="t c" style="left:874.19px;top:512px;font-size:9.4px;line-height:13px;color:#111;letter-spacing:0.300px;">€</div>
<div class="t c" style="left:946.34px;top:512px;font-size:9.4px;line-height:13px;color:#111;letter-spacing:0.300px;">-</div>
<div class="t c" style="left:962.69px;top:512px;font-size:9.4px;line-height:13px;color:#111;letter-spacing:0.300px;">€</div>
<div class="t c" style="left:1165.34px;top:512px;font-size:9.4px;line-height:13px;color:#111;letter-spacing:0.300px;">-</div>
<div class="t c" style="left:1181.69px;top:512px;font-size:9.4px;line-height:13px;color:#111;letter-spacing:0.300px;">€</div>
<div class="t c" style="left:101.14px;top:527px;font-size:9.4px;line-height:13px;color:#111;letter-spacing:0.300px;">0</div>
<div class="t c" style="left:692.85px;top:527px;font-size:9.4px;line-height:13px;color:#111;letter-spacing:0.518px;">0,00</div>
<div class="t c" style="left:812.34px;top:527px;font-size:9.4px;line-height:13px;color:#111;letter-spacing:0.300px;">-</div>
<div class="t c" style="left:828.69px;top:527px;font-size:9.4px;line-height:13px;color:#111;letter-spacing:0.300px;">€</div>
<div class="t c" style="left:857.84px;top:527px;font-size:9.4px;line-height:13px;color:#111;letter-spacing:0.300px;">-</div>
<div class="t c" style="left:874.19px;top:527px;font-size:9.4px;line-height:13px;color:#111;letter-spacing:0.300px;">€</div>
<div class="t c" style="left:946.34px;top:527px;font-size:9.4px;line-height:13px;color:#111;letter-spacing:0.300px;">-</div>
<div class="t c" style="left:962.69px;top:527px;font-size:9.4px;line-height:13px;color:#111;letter-spacing:0.300px;">€</div>
<div class="t c" style="left:1165.34px;top:527px;font-size:9.4px;line-height:13px;color:#111;letter-spacing:0.300px;">-</div>
<div class="t c" style="left:1181.69px;top:527px;font-size:9.4px;line-height:13px;color:#111;letter-spacing:0.300px;">€</div>
<div class="t c" style="left:101.14px;top:541px;font-size:9.4px;line-height:13px;color:#111;letter-spacing:0.300px;">0</div>
<div class="t c" style="left:692.85px;top:541px;font-size:9.4px;line-height:13px;color:#111;letter-spacing:0.518px;">0,00</div>
<div class="t c" style="left:812.34px;top:541px;font-size:9.4px;line-height:13px;color:#111;letter-spacing:0.300px;">-</div>
<div class="t c" style="left:828.69px;top:541px;font-size:9.4px;line-height:13px;color:#111;letter-spacing:0.300px;">€</div>
<div class="t c" style="left:857.84px;top:541px;font-size:9.4px;line-height:13px;color:#111;letter-spacing:0.300px;">-</div>
<div class="t c" style="left:874.19px;top:541px;font-size:9.4px;line-height:13px;color:#111;letter-spacing:0.300px;">€</div>
<div class="t c" style="left:946.34px;top:541px;font-size:9.4px;line-height:13px;color:#111;letter-spacing:0.300px;">-</div>
<div class="t c" style="left:962.69px;top:541px;font-size:9.4px;line-height:13px;color:#111;letter-spacing:0.300px;">€</div>
<div class="t c" style="left:1165.34px;top:541px;font-size:9.4px;line-height:13px;color:#111;letter-spacing:0.300px;">-</div>
<div class="t c" style="left:1181.69px;top:541px;font-size:9.4px;line-height:13px;color:#111;letter-spacing:0.300px;">€</div>
<div class="t c" style="left:101.14px;top:555px;font-size:9.4px;line-height:13px;color:#111;letter-spacing:0.300px;">0</div>
<div class="t c" style="left:692.85px;top:555px;font-size:9.4px;line-height:13px;color:#111;letter-spacing:0.518px;">0,00</div>
<div class="t c" style="left:812.34px;top:555px;font-size:9.4px;line-height:13px;color:#111;letter-spacing:0.300px;">-</div>
<div class="t c" style="left:828.69px;top:555px;font-size:9.4px;line-height:13px;color:#111;letter-spacing:0.300px;">€</div>
<div class="t c" style="left:857.84px;top:555px;font-size:9.4px;line-height:13px;color:#111;letter-spacing:0.300px;">-</div>
<div class="t c" style="left:874.19px;top:555px;font-size:9.4px;line-height:13px;color:#111;letter-spacing:0.300px;">€</div>
<div class="t c" style="left:946.34px;top:555px;font-size:9.4px;line-height:13px;color:#111;letter-spacing:0.300px;">-</div>
<div class="t c" style="left:962.69px;top:555px;font-size:9.4px;line-height:13px;color:#111;letter-spacing:0.300px;">€</div>
<div class="t c" style="left:1165.34px;top:555px;font-size:9.4px;line-height:13px;color:#111;letter-spacing:0.300px;">-</div>
<div class="t c" style="left:1181.69px;top:555px;font-size:9.4px;line-height:13px;color:#111;letter-spacing:0.300px;">€</div>
<div class="t c" style="left:101.14px;top:569px;font-size:9.4px;line-height:13px;color:#111;letter-spacing:0.300px;">0</div>
<div class="t c" style="left:692.85px;top:569px;font-size:9.4px;line-height:13px;color:#111;letter-spacing:0.518px;">0,00</div>
<div class="t c" style="left:812.34px;top:569px;font-size:9.4px;line-height:13px;color:#111;letter-spacing:0.300px;">-</div>
<div class="t c" style="left:828.69px;top:569px;font-size:9.4px;line-height:13px;color:#111;letter-spacing:0.300px;">€</div>
<div class="t c" style="left:857.84px;top:569px;font-size:9.4px;line-height:13px;color:#111;letter-spacing:0.300px;">-</div>
<div class="t c" style="left:874.19px;top:569px;font-size:9.4px;line-height:13px;color:#111;letter-spacing:0.300px;">€</div>
<div class="t c" style="left:946.34px;top:569px;font-size:9.4px;line-height:13px;color:#111;letter-spacing:0.300px;">-</div>
<div class="t c" style="left:962.69px;top:569px;font-size:9.4px;line-height:13px;color:#111;letter-spacing:0.300px;">€</div>
<div class="t c" style="left:1165.34px;top:569px;font-size:9.4px;line-height:13px;color:#111;letter-spacing:0.300px;">-</div>
<div class="t c" style="left:1181.69px;top:569px;font-size:9.4px;line-height:13px;color:#111;letter-spacing:0.300px;">€</div>
<div class="t c" style="left:101.14px;top:584px;font-size:9.4px;line-height:13px;color:#111;letter-spacing:0.300px;">0</div>
<div class="t c" style="left:692.85px;top:584px;font-size:9.4px;line-height:13px;color:#111;letter-spacing:0.518px;">0,00</div>
<div class="t c" style="left:812.34px;top:584px;font-size:9.4px;line-height:13px;color:#111;letter-spacing:0.300px;">-</div>
<div class="t c" style="left:828.69px;top:584px;font-size:9.4px;line-height:13px;color:#111;letter-spacing:0.300px;">€</div>
<div class="t c" style="left:857.84px;top:584px;font-size:9.4px;line-height:13px;color:#111;letter-spacing:0.300px;">-</div>
<div class="t c" style="left:874.19px;top:584px;font-size:9.4px;line-height:13px;color:#111;letter-spacing:0.300px;">€</div>
<div class="t c" style="left:946.34px;top:584px;font-size:9.4px;line-height:13px;color:#111;letter-spacing:0.300px;">-</div>
<div class="t c" style="left:962.69px;top:584px;font-size:9.4px;line-height:13px;color:#111;letter-spacing:0.300px;">€</div>
<div class="t c" style="left:1165.34px;top:584px;font-size:9.4px;line-height:13px;color:#111;letter-spacing:0.300px;">-</div>
<div class="t c" style="left:1181.69px;top:584px;font-size:9.4px;line-height:13px;color:#111;letter-spacing:0.300px;">€</div>
<div class="t c" style="left:101.14px;top:598px;font-size:9.4px;line-height:13px;color:#111;letter-spacing:0.300px;">0</div>
<div class="t c" style="left:692.85px;top:598px;font-size:9.4px;line-height:13px;color:#111;letter-spacing:0.518px;">0,00</div>
<div class="t c" style="left:812.34px;top:598px;font-size:9.4px;line-height:13px;color:#111;letter-spacing:0.300px;">-</div>
<div class="t c" style="left:828.69px;top:598px;font-size:9.4px;line-height:13px;color:#111;letter-spacing:0.300px;">€</div>
<div class="t c" style="left:857.84px;top:598px;font-size:9.4px;line-height:13px;color:#111;letter-spacing:0.300px;">-</div>
<div class="t c" style="left:874.19px;top:598px;font-size:9.4px;line-height:13px;color:#111;letter-spacing:0.300px;">€</div>
<div class="t c" style="left:946.34px;top:598px;font-size:9.4px;line-height:13px;color:#111;letter-spacing:0.300px;">-</div>
<div class="t c" style="left:962.69px;top:598px;font-size:9.4px;line-height:13px;color:#111;letter-spacing:0.300px;">€</div>
<div class="t c" style="left:1165.34px;top:598px;font-size:9.4px;line-height:13px;color:#111;letter-spacing:0.300px;">-</div>
<div class="t c" style="left:1181.69px;top:598px;font-size:9.4px;line-height:13px;color:#111;letter-spacing:0.300px;">€</div>
<div class="t c" style="left:101.14px;top:612px;font-size:9.4px;line-height:13px;color:#111;letter-spacing:0.300px;">0</div>
<div class="t c" style="left:692.85px;top:612px;font-size:9.4px;line-height:13px;color:#111;letter-spacing:0.518px;">0,00</div>
<div class="t c" style="left:812.34px;top:612px;font-size:9.4px;line-height:13px;color:#111;letter-spacing:0.300px;">-</div>
<div class="t c" style="left:828.69px;top:612px;font-size:9.4px;line-height:13px;color:#111;letter-spacing:0.300px;">€</div>
<div class="t c" style="left:857.84px;top:612px;font-size:9.4px;line-height:13px;color:#111;letter-spacing:0.300px;">-</div>
<div class="t c" style="left:874.19px;top:612px;font-size:9.4px;line-height:13px;color:#111;letter-spacing:0.300px;">€</div>
<div class="t c" style="left:946.34px;top:612px;font-size:9.4px;line-height:13px;color:#111;letter-spacing:0.300px;">-</div>
<div class="t c" style="left:962.69px;top:612px;font-size:9.4px;line-height:13px;color:#111;letter-spacing:0.300px;">€</div>
<div class="t c" style="left:1165.34px;top:612px;font-size:9.4px;line-height:13px;color:#111;letter-spacing:0.300px;">-</div>
<div class="t c" style="left:1181.69px;top:612px;font-size:9.4px;line-height:13px;color:#111;letter-spacing:0.300px;">€</div>
<div class="t c" style="left:101.14px;top:626px;font-size:9.4px;line-height:13px;color:#111;letter-spacing:0.300px;">0</div>
<div class="t c" style="left:692.85px;top:626px;font-size:9.4px;line-height:13px;color:#111;letter-spacing:0.518px;">0,00</div>
<div class="t c" style="left:812.34px;top:626px;font-size:9.4px;line-height:13px;color:#111;letter-spacing:0.300px;">-</div>
<div class="t c" style="left:828.69px;top:626px;font-size:9.4px;line-height:13px;color:#111;letter-spacing:0.300px;">€</div>
<div class="t c" style="left:857.84px;top:626px;font-size:9.4px;line-height:13px;color:#111;letter-spacing:0.300px;">-</div>
<div class="t c" style="left:874.19px;top:626px;font-size:9.4px;line-height:13px;color:#111;letter-spacing:0.300px;">€</div>
<div class="t c" style="left:946.34px;top:626px;font-size:9.4px;line-height:13px;color:#111;letter-spacing:0.300px;">-</div>
<div class="t c" style="left:962.69px;top:626px;font-size:9.4px;line-height:13px;color:#111;letter-spacing:0.300px;">€</div>
<div class="t c" style="left:1165.34px;top:626px;font-size:9.4px;line-height:13px;color:#111;letter-spacing:0.300px;">-</div>
<div class="t c" style="left:1181.69px;top:626px;font-size:9.4px;line-height:13px;color:#111;letter-spacing:0.300px;">€</div>
<div class="t c" style="left:101.14px;top:641px;font-size:9.4px;line-height:13px;color:#111;letter-spacing:0.300px;">0</div>
<div class="t c" style="left:692.85px;top:641px;font-size:9.4px;line-height:13px;color:#111;letter-spacing:0.518px;">0,00</div>
<div class="t c" style="left:812.34px;top:641px;font-size:9.4px;line-height:13px;color:#111;letter-spacing:0.300px;">-</div>
<div class="t c" style="left:828.69px;top:641px;font-size:9.4px;line-height:13px;color:#111;letter-spacing:0.300px;">€</div>
<div class="t c" style="left:857.84px;top:641px;font-size:9.4px;line-height:13px;color:#111;letter-spacing:0.300px;">-</div>
<div class="t c" style="left:874.19px;top:641px;font-size:9.4px;line-height:13px;color:#111;letter-spacing:0.300px;">€</div>
<div class="t c" style="left:946.34px;top:641px;font-size:9.4px;line-height:13px;color:#111;letter-spacing:0.300px;">-</div>
<div class="t c" style="left:962.69px;top:641px;font-size:9.4px;line-height:13px;color:#111;letter-spacing:0.300px;">€</div>
<div class="t c" style="left:1165.34px;top:641px;font-size:9.4px;line-height:13px;color:#111;letter-spacing:0.300px;">-</div>
<div class="t c" style="left:1181.69px;top:641px;font-size:9.4px;line-height:13px;color:#111;letter-spacing:0.300px;">€</div>
<div class="t c" style="left:101.14px;top:655px;font-size:9.4px;line-height:13px;color:#111;letter-spacing:0.300px;">0</div>
<div class="t c" style="left:692.85px;top:655px;font-size:9.4px;line-height:13px;color:#111;letter-spacing:0.518px;">0,00</div>
<div class="t c" style="left:812.34px;top:655px;font-size:9.4px;line-height:13px;color:#111;letter-spacing:0.300px;">-</div>
<div class="t c" style="left:828.69px;top:655px;font-size:9.4px;line-height:13px;color:#111;letter-spacing:0.300px;">€</div>
<div class="t c" style="left:857.84px;top:655px;font-size:9.4px;line-height:13px;color:#111;letter-spacing:0.300px;">-</div>
<div class="t c" style="left:874.19px;top:655px;font-size:9.4px;line-height:13px;color:#111;letter-spacing:0.300px;">€</div>
<div class="t c" style="left:946.34px;top:655px;font-size:9.4px;line-height:13px;color:#111;letter-spacing:0.300px;">-</div>
<div class="t c" style="left:962.69px;top:655px;font-size:9.4px;line-height:13px;color:#111;letter-spacing:0.300px;">€</div>
<div class="t c" style="left:1165.34px;top:655px;font-size:9.4px;line-height:13px;color:#111;letter-spacing:0.300px;">-</div>
<div class="t c" style="left:1181.69px;top:655px;font-size:9.4px;line-height:13px;color:#111;letter-spacing:0.300px;">€</div>
<div class="t c" style="left:101.14px;top:669px;font-size:9.4px;line-height:13px;color:#111;letter-spacing:0.300px;">0</div>
<div class="t c" style="left:692.85px;top:669px;font-size:9.4px;line-height:13px;color:#111;letter-spacing:0.518px;">0,00</div>
<div class="t c" style="left:812.34px;top:669px;font-size:9.4px;line-height:13px;color:#111;letter-spacing:0.300px;">-</div>
<div class="t c" style="left:828.69px;top:669px;font-size:9.4px;line-height:13px;color:#111;letter-spacing:0.300px;">€</div>
<div class="t c" style="left:857.84px;top:669px;font-size:9.4px;line-height:13px;color:#111;letter-spacing:0.300px;">-</div>
<div class="t c" style="left:874.19px;top:669px;font-size:9.4px;line-height:13px;color:#111;letter-spacing:0.300px;">€</div>
<div class="t c" style="left:946.34px;top:669px;font-size:9.4px;line-height:13px;color:#111;letter-spacing:0.300px;">-</div>
<div class="t c" style="left:962.69px;top:669px;font-size:9.4px;line-height:13px;color:#111;letter-spacing:0.300px;">€</div>
<div class="t c" style="left:1165.34px;top:669px;font-size:9.4px;line-height:13px;color:#111;letter-spacing:0.300px;">-</div>
<div class="t c" style="left:1181.69px;top:669px;font-size:9.4px;line-height:13px;color:#111;letter-spacing:0.300px;">€</div>
<div class="t c" style="left:101.14px;top:684px;font-size:9.4px;line-height:13px;color:#111;letter-spacing:0.300px;">0</div>
<div class="t c" style="left:692.85px;top:684px;font-size:9.4px;line-height:13px;color:#111;letter-spacing:0.518px;">0,00</div>
<div class="t c" style="left:812.34px;top:684px;font-size:9.4px;line-height:13px;color:#111;letter-spacing:0.300px;">-</div>
<div class="t c" style="left:828.69px;top:684px;font-size:9.4px;line-height:13px;color:#111;letter-spacing:0.300px;">€</div>
<div class="t c" style="left:857.84px;top:684px;font-size:9.4px;line-height:13px;color:#111;letter-spacing:0.300px;">-</div>
<div class="t c" style="left:874.19px;top:684px;font-size:9.4px;line-height:13px;color:#111;letter-spacing:0.300px;">€</div>
<div class="t c" style="left:946.34px;top:684px;font-size:9.4px;line-height:13px;color:#111;letter-spacing:0.300px;">-</div>
<div class="t c" style="left:962.69px;top:684px;font-size:9.4px;line-height:13px;color:#111;letter-spacing:0.300px;">€</div>
<div class="t c" style="left:1165.34px;top:684px;font-size:9.4px;line-height:13px;color:#111;letter-spacing:0.300px;">-</div>
<div class="t c" style="left:1181.69px;top:684px;font-size:9.4px;line-height:13px;color:#111;letter-spacing:0.300px;">€</div>
<div class="t c" style="left:101.14px;top:698px;font-size:9.4px;line-height:13px;color:#111;letter-spacing:0.300px;">0</div>
<div class="t c" style="left:692.85px;top:698px;font-size:9.4px;line-height:13px;color:#111;letter-spacing:0.518px;">0,00</div>
<div class="t c" style="left:812.34px;top:698px;font-size:9.4px;line-height:13px;color:#111;letter-spacing:0.300px;">-</div>
<div class="t c" style="left:828.69px;top:698px;font-size:9.4px;line-height:13px;color:#111;letter-spacing:0.300px;">€</div>
<div class="t c" style="left:857.84px;top:698px;font-size:9.4px;line-height:13px;color:#111;letter-spacing:0.300px;">-</div>
<div class="t c" style="left:874.19px;top:698px;font-size:9.4px;line-height:13px;color:#111;letter-spacing:0.300px;">€</div>
<div class="t c" style="left:946.34px;top:698px;font-size:9.4px;line-height:13px;color:#111;letter-spacing:0.300px;">-</div>
<div class="t c" style="left:962.69px;top:698px;font-size:9.4px;line-height:13px;color:#111;letter-spacing:0.300px;">€</div>
<div class="t c" style="left:1165.34px;top:698px;font-size:9.4px;line-height:13px;color:#111;letter-spacing:0.300px;">-</div>
<div class="t c" style="left:1181.69px;top:698px;font-size:9.4px;line-height:13px;color:#111;letter-spacing:0.300px;">€</div>
<div class="t c" style="left:101.14px;top:712px;font-size:9.4px;line-height:13px;color:#111;letter-spacing:0.300px;">0</div>
<div class="t c" style="left:692.85px;top:712px;font-size:9.4px;line-height:13px;color:#111;letter-spacing:0.518px;">0,00</div>
<div class="t c" style="left:812.34px;top:712px;font-size:9.4px;line-height:13px;color:#111;letter-spacing:0.300px;">-</div>
<div class="t c" style="left:828.69px;top:712px;font-size:9.4px;line-height:13px;color:#111;letter-spacing:0.300px;">€</div>
<div class="t c" style="left:857.84px;top:712px;font-size:9.4px;line-height:13px;color:#111;letter-spacing:0.300px;">-</div>
<div class="t c" style="left:874.19px;top:712px;font-size:9.4px;line-height:13px;color:#111;letter-spacing:0.300px;">€</div>
<div class="t c" style="left:946.34px;top:712px;font-size:9.4px;line-height:13px;color:#111;letter-spacing:0.300px;">-</div>
<div class="t c" style="left:962.69px;top:712px;font-size:9.4px;line-height:13px;color:#111;letter-spacing:0.300px;">€</div>
<div class="t c" style="left:1165.34px;top:712px;font-size:9.4px;line-height:13px;color:#111;letter-spacing:0.300px;">-</div>
<div class="t c" style="left:1181.69px;top:712px;font-size:9.4px;line-height:13px;color:#111;letter-spacing:0.300px;">€</div>
<div class="t c" style="left:101.14px;top:726px;font-size:9.4px;line-height:13px;color:#111;letter-spacing:0.300px;">0</div>
<div class="t c" style="left:692.85px;top:726px;font-size:9.4px;line-height:13px;color:#111;letter-spacing:0.518px;">0,00</div>
<div class="t c" style="left:812.34px;top:726px;font-size:9.4px;line-height:13px;color:#111;letter-spacing:0.300px;">-</div>
<div class="t c" style="left:828.69px;top:726px;font-size:9.4px;line-height:13px;color:#111;letter-spacing:0.300px;">€</div>
<div class="t c" style="left:857.84px;top:726px;font-size:9.4px;line-height:13px;color:#111;letter-spacing:0.300px;">-</div>
<div class="t c" style="left:874.19px;top:726px;font-size:9.4px;line-height:13px;color:#111;letter-spacing:0.300px;">€</div>
<div class="t c" style="left:946.34px;top:726px;font-size:9.4px;line-height:13px;color:#111;letter-spacing:0.300px;">-</div>
<div class="t c" style="left:962.69px;top:726px;font-size:9.4px;line-height:13px;color:#111;letter-spacing:0.300px;">€</div>
<div class="t c" style="left:1165.34px;top:726px;font-size:9.4px;line-height:13px;color:#111;letter-spacing:0.300px;">-</div>
<div class="t c" style="left:1181.69px;top:726px;font-size:9.4px;line-height:13px;color:#111;letter-spacing:0.300px;">€</div>
<svg style="left:0px;top:0px;" width="1221" height="779" viewBox="0 0 1221 779"><rect x="1201.7" y="186" width="20" height="547" fill="#e6e6e6"/><rect x="1205" y="194" width="14" height="539" fill="#d9d9d9"/><rect x="1205.4" y="196.2" width="13.2" height="13" fill="#fff" stroke="#ababab" stroke-width="1"/><path d="M1208.6 204.4l3.4-3.4l3.4 3.4z" fill="#777" /><rect x="1205.4" y="210.6" width="13.2" height="20.6" fill="#fff" stroke="#ababab" stroke-width="1"/><rect x="1205.4" y="718.4" width="13.2" height="13.6" fill="#fff" stroke="#ababab" stroke-width="1"/><path d="M1208.6 723.6h6.8l-3.4 3.6z" fill="#777" /><rect x="0" y="733" width="1221" height="26" fill="#e6e6e6"/><line x1="24.5" y1="733" x2="1201" y2="733" stroke="#b9b9b9" stroke-width="1"/><path d="M30 741.6v7.6l-4-3.8z" fill="#c9c9c9" /><path d="M53.2 741.4v8l4.2-4z" fill="#217346" /><line x1="95.6" y1="736" x2="95.6" y2="755.5" stroke="#ababab" stroke-width="1"/><line x1="177.2" y1="736" x2="177.2" y2="755.5" stroke="#ababab" stroke-width="1"/><line x1="280" y1="736" x2="280" y2="755.5" stroke="#ababab" stroke-width="1"/><line x1="355" y1="736" x2="355" y2="755.5" stroke="#ababab" stroke-width="1"/><line x1="403.4" y1="736" x2="403.4" y2="755.5" stroke="#ababab" stroke-width="1"/><line x1="455.8" y1="736" x2="455.8" y2="755.5" stroke="#ababab" stroke-width="1"/><line x1="757" y1="736" x2="757" y2="755.5" stroke="#ababab" stroke-width="1"/><line x1="849.8" y1="736" x2="849.8" y2="755.5" stroke="#ababab" stroke-width="1"/><rect x="97.5" y="735.6" width="77.5" height="20.2" fill="#000"/><rect x="179.5" y="735.6" width="98.5" height="20.2" fill="#000"/><rect x="282" y="735.6" width="70.5" height="20.2" fill="#7030a0"/><rect x="357.5" y="735.6" width="43.5" height="20.2" fill="#ffff00"/><rect x="405.7" y="735.6" width="48.0" height="20.2" fill="#ffff00"/><rect x="458" y="735.6" width="55.799999999999955" height="20.2" fill="#ffff00"/><rect x="648.8" y="735.6" width="106.20000000000005" height="20.2" fill="#ffff00"/><rect x="759.2" y="735.6" width="88.29999999999995" height="20.2" fill="#ffff00"/><rect x="852.5" y="735.6" width="15.6" height="20.2" fill="#ffff00"/><defs><linearGradient id="ag" x1="0" y1="0" x2="0" y2="1"><stop offset="0" stop-color="#ffffff"/><stop offset="0.55" stop-color="#ffffee"/><stop offset="1" stop-color="#ffffb0"/></linearGradient></defs><rect x="515.8" y="733" width="130" height="23.4" fill="url(#ag)"/><line x1="515.8" y1="733" x2="515.8" y2="756" stroke="#b9b9b9" stroke-width="1"/><line x1="645.8" y1="733" x2="645.8" y2="756" stroke="#b9b9b9" stroke-width="1"/><rect x="515.8" y="755" width="130" height="2" fill="#217346"/><circle cx="906.3" cy="745.5" r="6.8" fill="none" stroke="#8a8a8a" stroke-width="1.1"/><path d="M902.6 745.5h7.4M906.3 741.8v7.4" fill="none" stroke="#8a8a8a" stroke-width="1.3" /><rect x="933.4" y="741.2" width="1.5" height="1.5" fill="#9c9c9c"/><rect x="933.4" y="744.8" width="1.5" height="1.5" fill="#9c9c9c"/><rect x="933.4" y="748.4" width="1.5" height="1.5" fill="#9c9c9c"/><rect x="949.5" y="739.4" width="252.5" height="13.8" fill="#d9d9d9"/><rect x="949.7" y="739.6" width="14" height="13.2" fill="#fff" stroke="#ababab" stroke-width="1"/><path d="M958.6 742.8v6.8l-3.6-3.4z" fill="#666" /><rect x="964.2" y="739.6" width="15.8" height="13.2" fill="#fff" stroke="#ababab" stroke-width="1"/><rect x="1188" y="739.6" width="13.8" height="13.2" fill="#fff" stroke="#ababab" stroke-width="1"/><path d="M1193.4 742.8v6.8l3.6-3.4z" fill="#666" /><rect x="0" y="759" width="1221" height="20" fill="#f1f1f1"/><line x1="0" y1="758.8" x2="1221" y2="758.8" stroke="#d0d0d0" stroke-width="1"/><rect x="937.5" y="759.4" width="35.5" height="19.6" fill="#c8c8c8"/><rect x="948.8" y="763.4" width="11.4" height="11" fill="none" stroke="#666" stroke-width="1"/><line x1="952.5999999999999" y1="763.4" x2="952.5999999999999" y2="774.4" stroke="#666" stroke-width="1"/><line x1="948.8" y1="767.0699999999999" x2="960.2" y2="767.0699999999999" stroke="#666" stroke-width="1"/><line x1="956.4" y1="763.4" x2="956.4" y2="774.4" stroke="#666" stroke-width="1"/><line x1="948.8" y1="770.74" x2="960.2" y2="770.74" stroke="#666" stroke-width="1"/><rect x="984.6" y="763.4" width="12.6" height="11" fill="none" stroke="#777" stroke-width="1"/><rect x="987.4" y="765.8" width="7" height="6.2" fill="none" stroke="#777" stroke-width="1"/><line x1="989" y1="768" x2="992.8" y2="768" stroke="#999" stroke-width="0.8"/><line x1="989" y1="770" x2="992.8" y2="770" stroke="#999" stroke-width="0.8"/><rect x="1020.6" y="763.4" width="12.8" height="11" fill="none" stroke="#777" stroke-width="1"/><path d="M1024.4 763.4v5.4h9M1028 763.4v5.4" fill="none" stroke="#777" stroke-width="1" /><line x1="1050.4" y1="769.2" x2="1055.4" y2="769.2" stroke="#555" stroke-width="1.5"/><line x1="1059.6" y1="769.2" x2="1154" y2="769.2" stroke="#b0b0b0" stroke-width="1"/><rect x="1105.4" y="763.8" width="3.4" height="10.6" fill="#666"/><path d="M1157.8 769.2h6.4M1161 766v6.4" fill="none" stroke="#555" stroke-width="1.4" /></svg>
<div class="t" style="left:108.40px;top:737px;font-size:11.5px;line-height:16px;color:#fff;letter-spacing:0.204px;">Lies mich!</div>
<div class="t" style="left:192.20px;top:737px;font-size:11.5px;line-height:16px;color:#fff;letter-spacing:0.262px;">Einstellungen</div>
<div class="t" style="left:292.80px;top:737px;font-size:11.5px;line-height:16px;color:#fff;letter-spacing:0.166px;">Beispiele</div>
<div class="t" style="left:367.00px;top:737px;font-size:11.5px;line-height:16px;color:#2b2b00;letter-spacing:-0.206px;">Einn</div>
<div class="t" style="left:415.80px;top:737px;font-size:11.5px;line-height:16px;color:#2b2b00;letter-spacing:0.129px;">Ausg</div>
<div class="t" style="left:468.60px;top:737px;font-size:11.5px;line-height:16px;color:#2b2b00;letter-spacing:0.290px;">Bewirt</div>
<div class="t" style="left:659.00px;top:737px;font-size:11.5px;line-height:16px;color:#2b2b00;letter-spacing:0.205px;">GWG-Sammelp</div>
<div class="t" style="left:770.00px;top:737px;font-size:11.5px;line-height:16px;color:#2b2b00;letter-spacing:0.404px;">Anlageverm</div>
<div class="t" style="left:864.20px;top:737px;font-size:11.5px;line-height:16px;color:#222;width:3.6px;overflow:hidden;">C</div>
<div class="t" style="left:527.00px;top:737px;font-size:11.5px;line-height:16px;color:#217346;letter-spacing:0.358px;font-weight:bold;">VPMA - pausch.FK</div>
<div class="t" style="left:876.20px;top:737px;font-size:11.5px;line-height:16px;color:#217346;letter-spacing:0.007px;font-weight:bold;">...</div>
<div class="t" style="left:7.20px;top:762px;font-size:10.5px;line-height:15px;color:#555;letter-spacing:0.034px;">Bereit</div>
<div class="t" style="left:1174.40px;top:762px;font-size:10.5px;line-height:15px;color:#555;letter-spacing:-0.293px;">100 %</div>
</div></body></html>
